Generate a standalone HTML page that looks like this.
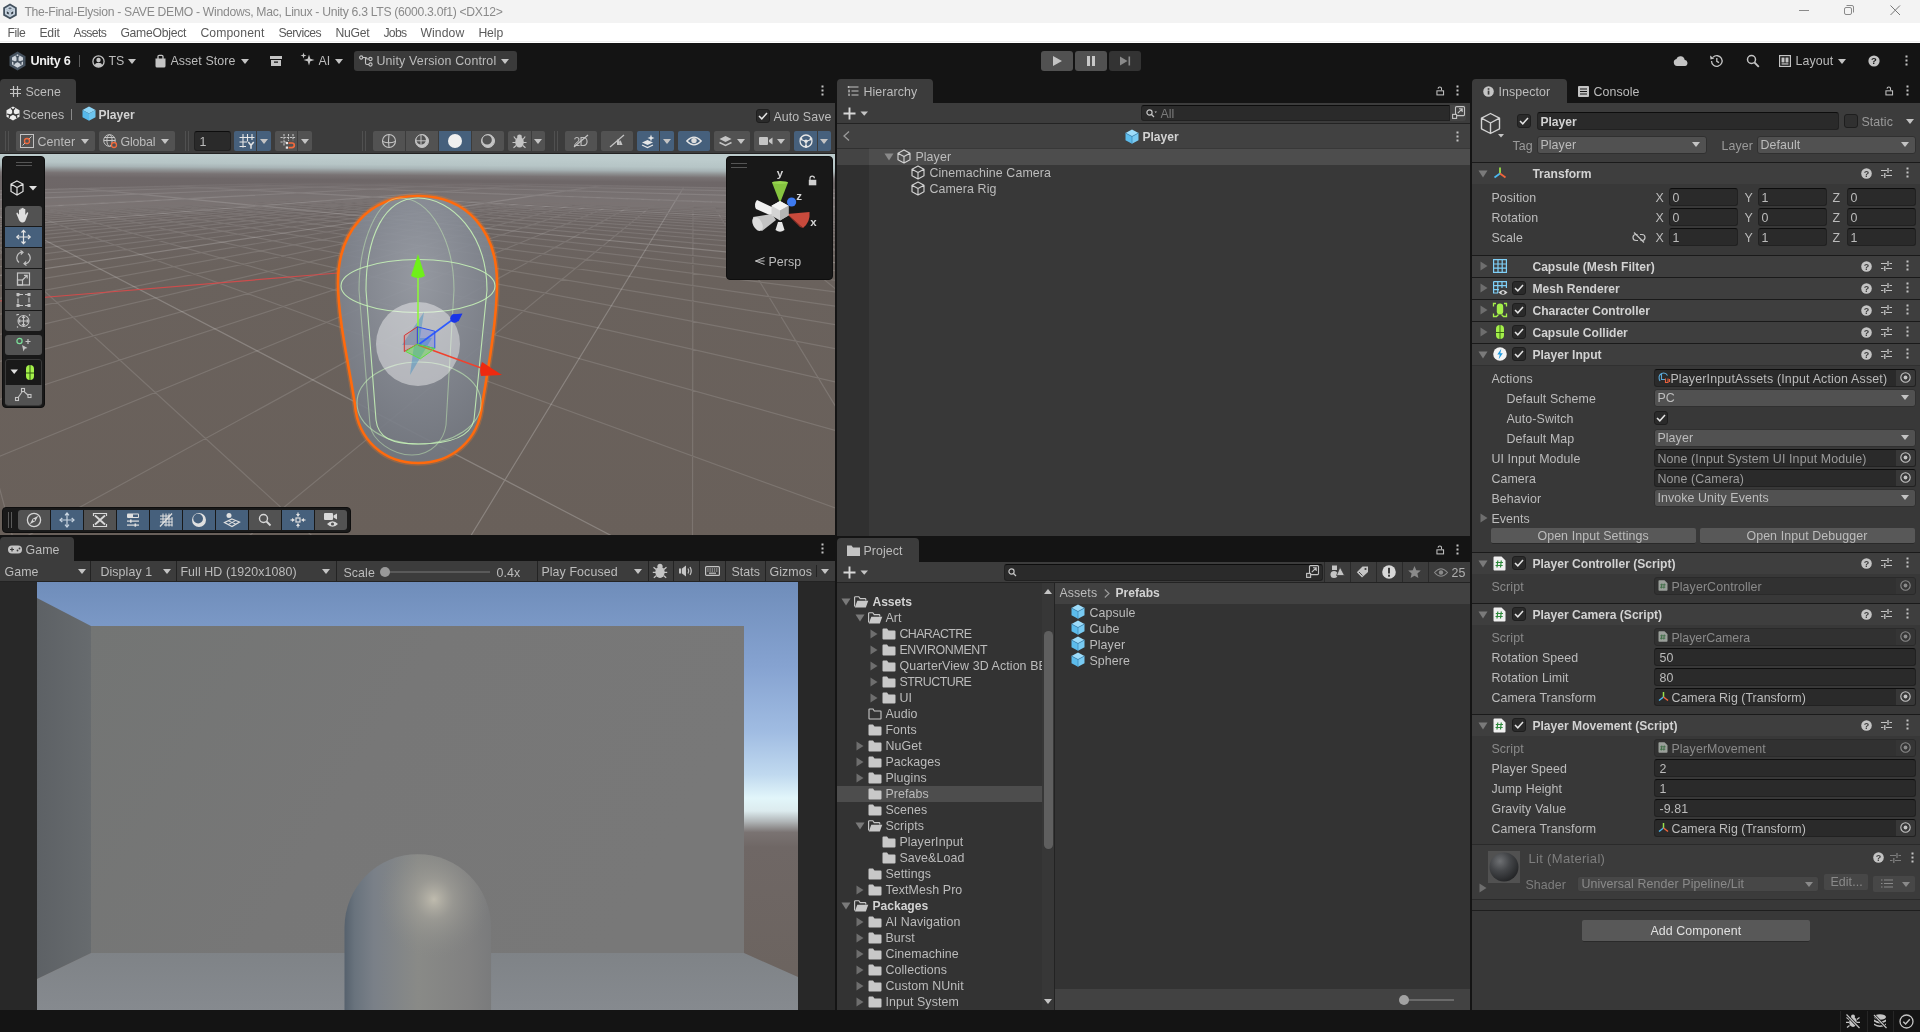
<!DOCTYPE html>
<html><head><meta charset="utf-8"><title>Unity</title>
<style>
*{box-sizing:border-box;margin:0;padding:0}
html,body{width:1920px;height:1032px;overflow:hidden;background:#141414}
body{font-family:"Liberation Sans",sans-serif;font-size:12px;color:#c4c4c4;position:relative;line-height:1}
.a{position:absolute}
.t{position:absolute;white-space:nowrap;line-height:16px;height:16px;font-size:12.4px;letter-spacing:0.1px;color:#bcbcbc;transform:translate(0.4px,0.6px);will-change:transform}
.b{font-weight:bold;color:#d2d2d2;letter-spacing:0;font-size:12.1px}
svg{position:absolute;overflow:visible}
svg:has(text){will-change:transform}
.tab{position:absolute;background:#3c3c3c;border-radius:4px 4px 0 0;height:24px}
.btn{position:absolute;background:#525252;border-radius:2px;height:20px}
.btn.on{background:#46607c}
.dd{position:absolute;background:#515151;border:1px solid #303030;border-radius:3px;height:18px}
.inp{position:absolute;background:#2a2a2a;border:1px solid #212121;border-top-color:#0d0d0d;border-radius:3px;height:18px}
.chk{position:absolute;width:14px;height:14px;background:#2a2a2a;border:1px solid #1e1e1e;border-radius:3px}
.hdr{position:absolute;left:1472px;width:448px;height:22px;background:#3e3e3e;border-top:1px solid #1a1a1a}
.arr{position:absolute;width:0;height:0;border-left:4.5px solid transparent;border-right:4.5px solid transparent;border-top:5px solid #c4c4c4}
</style></head><body>
<!-- window title bar -->
<div class="a" style="left:0;top:0;width:1920px;height:23px;background:#f3f3f3"></div>
<svg style="left:3px;top:3px" width="15" height="17" viewBox="0 0 15 17"><path d="M7 0.500 L13.800 4.400 V12.400 L7 16.300 L0.200 12.400 V4.400 Z" fill="#44525f"/><path d="M7 2.600 L12 5.500 V11.300 L7 14.200 L2 11.300 V5.500 Z" fill="#c8d4e0"/><path d="M7 4.200 L9 5.300 L7 6.400 L5 5.300 Z" fill="#5d6c7a"/><path d="M3.800 8.300 L5.800 9.400 V11.600 L3.800 10.500 Z M10.200 8.300 L8.200 9.400 V11.600 L10.200 10.500 Z" fill="#2c3640"/><path d="M7 8.200 V14 M2.200 5.600 L7 8.200 L11.800 5.600" stroke="#a9b7c5" stroke-width="0.800" fill="none"/></svg>
<div class="t" style="left:24px;top:3px;font-size:12.2px;color:#8a8a8a;letter-spacing:0.12px;letter-spacing:-0.30px">The-Final-Elysion - SAVE DEMO - Windows, Mac, Linux - Unity 6.3 LTS (6000.3.0f1) &lt;DX12&gt;</div>
<svg style="left:1799px;top:5px" width="110" height="12" viewBox="0 0 110 12"><path d="M0 5.5 H10" stroke="#8a8a8a" stroke-width="1"/><rect x="45.5" y="2.500" width="7" height="7" rx="1.500" fill="none" stroke="#8a8a8a"/><path d="M47.500 0.500 H53 a1.500 1.500 0 0 1 1.500 1.500 V7.500" fill="none" stroke="#8a8a8a"/><path d="M91.500 0.500 L101 10 M101 0.500 L91.500 10" stroke="#777" stroke-width="1"/></svg>
<!-- menu bar -->
<div class="a" style="left:0;top:23px;width:1920px;height:20px;background:#ffffff"></div><div class="a" style="left:0;top:41px;width:1920px;height:1px;background:#efefef"></div>
<div class="t" style="left:7px;top:24px;color:#5a5a5a;font-size:12.2px;letter-spacing:0;letter-spacing:-0.41px">File</div>
<div class="t" style="left:39px;top:24px;color:#5a5a5a;font-size:12.2px;letter-spacing:0;letter-spacing:-0.18px">Edit</div>
<div class="t" style="left:73px;top:24px;color:#5a5a5a;font-size:12.2px;letter-spacing:0;letter-spacing:-0.65px">Assets</div>
<div class="t" style="left:120px;top:24px;color:#5a5a5a;font-size:12.2px;letter-spacing:0;letter-spacing:-0.27px">GameObject</div>
<div class="t" style="left:200px;top:24px;color:#5a5a5a;font-size:12.2px;letter-spacing:0;letter-spacing:0.11px">Component</div>
<div class="t" style="left:278px;top:24px;color:#5a5a5a;font-size:12.2px;letter-spacing:0;letter-spacing:-0.50px">Services</div>
<div class="t" style="left:335px;top:24px;color:#5a5a5a;font-size:12.2px;letter-spacing:0;letter-spacing:-0.25px">NuGet</div>
<div class="t" style="left:383px;top:24px;color:#5a5a5a;font-size:12.2px;letter-spacing:0;letter-spacing:-0.69px">Jobs</div>
<div class="t" style="left:420px;top:24px;color:#5a5a5a;font-size:12.2px;letter-spacing:0;letter-spacing:0.11px">Window</div>
<div class="t" style="left:478px;top:24px;color:#5a5a5a;font-size:12.2px;letter-spacing:0;letter-spacing:-0.09px">Help</div>
<!-- main toolbar -->
<div class="a" style="left:0;top:43px;width:1920px;height:989px;background:#141414"></div>
<svg style="left:9px;top:51px" width="17" height="20" viewBox="0 0 17 20"><path d="M8.500 0.500 L16.500 5.200 V14.800 L8.500 19.500 L0.500 14.800 V5.200 Z" fill="#46525f"/><path d="M8.500 3.300 L14 6.500 V13.500 L8.500 16.700 L3 13.500 V6.500 Z" fill="#cdd3da"/><path d="M8.500 10 V5.800 M8.500 10 L4.900 12.100 M8.500 10 L12.100 12.100" stroke="#46525f" stroke-width="2"/><path d="M6.600 4.400 L8.500 6.300 L10.400 4.400 M3 9.800 L5.300 10.600 L5 13.800 M14 9.800 L11.700 10.600 L12 13.800" stroke="#46525f" stroke-width="1.300" fill="none"/></svg>
<div class="t b" style="left:30px;top:52px;color:#f0f0f0;font-size:12.6px;letter-spacing:-0.29px">Unity 6</div>
<div class="a" style="left:79px;top:55px;width:1px;height:12px;background:#5a5a5a"></div>
<svg style="left:92px;top:55px" width="13" height="13" viewBox="0 0 13 13"><circle cx="6.500" cy="6.500" r="5.600" fill="none" stroke="#c4c4c4" stroke-width="1.300"/><circle cx="6.500" cy="5" r="2.200" fill="#c4c4c4"/><path d="M2.600 10.300 a4 3.200 0 0 1 7.800 0 a5.500 5.500 0 0 1 -7.800 0z" fill="#c4c4c4"/></svg>
<div class="t" style="left:108px;top:52px">TS</div>
<div class="arr" style="left:128px;top:59px"></div>
<svg style="left:155px;top:54px" width="11" height="14" viewBox="0 0 11 14"><path d="M0.500 4.500 H10.500 V12 a1.500 1.500 0 0 1 -1.500 1.500 H2 a1.500 1.500 0 0 1 -1.500 -1.500 Z" fill="#c4c4c4"/><path d="M3 5 V2.500 a1.200 1.200 0 0 1 1.200 -1.200 H6.800 a1.200 1.200 0 0 1 1.200 1.200 V5" fill="none" stroke="#c4c4c4" stroke-width="1.300"/></svg>
<div class="t" style="left:170px;top:52px">Asset Store</div>
<div class="arr" style="left:241px;top:59px"></div>
<svg style="left:270px;top:56px" width="12" height="11" viewBox="0 0 12 11"><rect x="0" y="0" width="12" height="3" fill="#c4c4c4"/><path d="M1 4 H11 V10 H1 Z M4 5.500 V6.800 H8 V5.500 Z" fill="#c4c4c4" fill-rule="evenodd"/></svg>
<svg style="left:300px;top:52px" width="15" height="15" viewBox="0 0 15 15"><path d="M9 2.500 L10.300 6.700 L14.500 8 L10.300 9.300 L9 13.500 L7.700 9.300 L3.500 8 L7.700 6.700 Z" fill="#c4c4c4"/><path d="M3.500 0.500 L4.200 2.800 L6.500 3.500 L4.200 4.200 L3.500 6.500 L2.800 4.200 L0.500 3.500 L2.800 2.800 Z" fill="#c4c4c4"/></svg>
<div class="t" style="left:318px;top:52px">AI</div>
<div class="arr" style="left:335px;top:59px"></div>
<div class="a" style="left:354px;top:51px;width:163px;height:20px;background:#3a3a3a;border-radius:3px"></div>
<svg style="left:359px;top:55px" width="14" height="12" viewBox="0 0 14 12"><circle cx="2.200" cy="2.500" r="1.600" fill="none" stroke="#c4c4c4" stroke-width="1.100"/><circle cx="11.500" cy="4" r="1.600" fill="none" stroke="#c4c4c4" stroke-width="1.100"/><circle cx="11.500" cy="9.500" r="1.600" fill="none" stroke="#c4c4c4" stroke-width="1.100"/><path d="M3.800 2.500 H6.500 Q8 2.500 8 4 H10 M6.500 2.500 V8 Q6.500 9.500 8 9.500 H10" fill="none" stroke="#c4c4c4" stroke-width="1.100"/></svg>
<div class="t" style="left:376px;top:52px;letter-spacing:0.17px">Unity Version Control</div>
<div class="arr" style="left:501px;top:59px"></div>
<!-- play controls -->
<div class="a" style="left:1041px;top:51px;width:32px;height:20px;background:#515151;border-radius:3px"></div>
<div class="a" style="left:1075px;top:51px;width:32px;height:20px;background:#515151;border-radius:3px"></div>
<div class="a" style="left:1109px;top:51px;width:32px;height:20px;background:#333333;border-radius:3px"></div>
<svg style="left:1041px;top:51px" width="100" height="20" viewBox="0 0 100 20"><path d="M12 5 L21 10 L12 15 Z" fill="#c4c4c4"/><rect x="46" y="5" width="3" height="10" fill="#c8c8c8"/><rect x="51" y="5" width="3" height="10" fill="#c8c8c8"/><path d="M79 5.500 L86.500 10 L79 14.500 Z" fill="#8a8a8a"/><rect x="87.500" y="5.500" width="1.600" height="9" fill="#8a8a8a"/></svg>
<!-- right toolbar -->
<svg style="left:1673px;top:55px" width="16" height="12" viewBox="0 0 16 12"><path d="M4 11 a3.500 3.500 0 0 1 -0.500 -6.900 a4.200 4.200 0 0 1 8.100 0.600 a3.200 3.200 0 0 1 0.400 6.300 Z" fill="#c4c4c4"/></svg>
<svg style="left:1709px;top:54px" width="15" height="14" viewBox="0 0 15 14"><path d="M2.500 7 a5.300 5.300 0 1 0 1.600 -3.800" fill="none" stroke="#c4c4c4" stroke-width="1.300"/><path d="M1 1.500 L1.500 5.500 L5.300 4.500 Z" fill="#c4c4c4"/><path d="M7.800 4 V7.300 L10 8.600" fill="none" stroke="#c4c4c4" stroke-width="1.300"/></svg>
<svg style="left:1746px;top:54px" width="14" height="14" viewBox="0 0 14 14"><circle cx="5.500" cy="5.500" r="4" fill="none" stroke="#c4c4c4" stroke-width="1.500"/><path d="M8.500 8.500 L12.800 12.800" stroke="#c4c4c4" stroke-width="1.800"/></svg>
<svg style="left:1779px;top:55px" width="12" height="12" viewBox="0 0 12 12"><rect x="0.600" y="0.600" width="10.800" height="10.800" fill="none" stroke="#c4c4c4" stroke-width="1.200"/><rect x="2.500" y="2.500" width="3" height="5" fill="#c4c4c4"/><rect x="6.500" y="2.500" width="3" height="5" fill="#c4c4c4"/><rect x="2.500" y="8.300" width="7" height="1.300" fill="#c4c4c4"/></svg>
<div class="t" style="left:1795px;top:52px">Layout</div>
<div class="arr" style="left:1838px;top:59px"></div>
<svg style="left:1868px;top:55px" width="12" height="12" viewBox="0 0 12 12"><circle cx="6" cy="6" r="5.600" fill="#c4c4c4"/><text x="6" y="9.300" text-anchor="middle" font-family="Liberation Sans,sans-serif" font-weight="bold" font-size="9.500" fill="#141414">?</text></svg>
<svg style="left:1905px;top:55px" width="3" height="12" viewBox="0 0 3 12"><rect x="0.500" y="0.500" width="2" height="2" fill="#c4c4c4"/><rect x="0.500" y="4.500" width="2" height="2" fill="#c4c4c4"/><rect x="0.500" y="8.500" width="2" height="2" fill="#c4c4c4"/></svg>
<!-- ===== Scene panel ===== -->
<div class="tab" style="left:0;top:79px;width:76px"></div>
<svg style="left:10px;top:86px" width="11" height="11" viewBox="0 0 11 11"><path d="M3.500 0 V11 M7.500 0 V11 M0 3.500 H11 M0 7.500 H11" stroke="#c4c4c4" stroke-width="1.200"/></svg>
<div class="t" style="left:25px;top:83px">Scene</div>
<svg style="left:821px;top:85px" width="3" height="12" viewBox="0 0 3 12"><rect x="0.500" y="0.500" width="2" height="2" fill="#c4c4c4"/><rect x="0.500" y="4.500" width="2" height="2" fill="#c4c4c4"/><rect x="0.500" y="8.500" width="2" height="2" fill="#c4c4c4"/></svg>
<div class="a" style="left:0;top:103px;width:835px;height:24px;background:#3c3c3c"></div>
<div class="a" style="left:0;top:127px;width:835px;height:27px;background:#3c3c3c;border-bottom:1px solid #232323"></div>
<svg style="left:6px;top:106px" width="14" height="15" viewBox="0 0 14 15"><path d="M7 0.500 L13.500 4.200 V10.800 L7 14.500 L0.500 10.800 V4.200 Z" fill="#ececec"/><path d="M7 7.800 V3.800 M7 7.800 L3.600 9.800 M7 7.800 L10.400 9.800" stroke="#3c3c3c" stroke-width="1.700"/><path d="M5 2.200 L7 4.200 L9 2.200 M0.800 8 L3.600 8.800 L3.200 12 M13.200 8 L10.400 8.800 L10.800 12" stroke="#3c3c3c" stroke-width="1.300" fill="none"/></svg>
<div class="t" style="left:22px;top:106px">Scenes</div>
<div class="a" style="left:71px;top:109px;width:1px;height:11px;background:#8a8a8a"></div>
<svg style="left:82px;top:106px" width="14" height="15" viewBox="0 0 14 15"><path d="M7 0.500 L13.500 4 L7 7.500 L0.500 4 Z" fill="#8fd6f7"/><path d="M0.500 4 L7 7.500 V14.800 L0.500 11.200 Z" fill="#56b8ea"/><path d="M13.500 4 L7 7.500 V14.800 L13.500 11.200 Z" fill="#6cc4ee"/></svg>
<div class="t b" style="left:98px;top:106px">Player</div>
<div class="chk" style="left:756px;top:109px;width:14px;height:14px"></div>
<svg style="left:758px;top:112px" width="10" height="8" viewBox="0 0 10 8"><path d="M1 4 L3.800 6.800 L9 1" stroke="#e4e4e4" stroke-width="1.500" fill="none"/></svg>
<div class="t" style="left:773px;top:108px">Auto Save</div>
<!-- scene toolbar -->
<div class="a" style="left:5px;top:131px;width:1px;height:20px;background:#505050"></div><div class="a" style="left:8px;top:131px;width:1px;height:20px;background:#505050"></div>
<div class="btn" style="left:16px;top:131px;width:79px"></div>
<svg style="left:20px;top:134px" width="14" height="14" viewBox="0 0 14 14"><rect x="0.500" y="0.500" width="13" height="13" fill="none" stroke="#c4c4c4"/><path d="M2.500 11.500 L11.500 2.500" stroke="#c4c4c4" stroke-width="1"/><circle cx="7" cy="7" r="2.500" fill="#525252" stroke="#f26a3d" stroke-width="1.300"/></svg>
<div class="t" style="left:37px;top:133px">Center</div><div class="arr" style="left:81px;top:139px"></div>
<div class="btn" style="left:99px;top:131px;width:76px"></div>
<svg style="left:103px;top:134px" width="15" height="15" viewBox="0 0 15 15"><circle cx="6.500" cy="6.500" r="5.800" fill="none" stroke="#c4c4c4"/><ellipse cx="6.500" cy="6.500" rx="2.600" ry="5.800" fill="none" stroke="#c4c4c4"/><path d="M0.700 6.500 H12.300 M1.500 3.500 H11.500" stroke="#c4c4c4"/><circle cx="11" cy="11" r="2.500" fill="#525252" stroke="#f26a3d" stroke-width="1.300"/></svg>
<div class="t" style="left:120px;top:133px;letter-spacing:-0.14px">Global</div><div class="arr" style="left:161px;top:139px"></div>
<div class="a" style="left:185px;top:131px;width:1px;height:20px;background:#505050"></div><div class="a" style="left:188px;top:131px;width:1px;height:20px;background:#505050"></div>
<div class="inp" style="left:194px;top:131px;width:37px;height:20px"></div><div class="t" style="left:199px;top:133px">1</div>
<div class="btn on" style="left:234px;top:131px;width:22px;border-radius:2px 0 0 2px"></div><div class="btn on" style="left:257px;top:131px;width:14px;border-radius:0 2px 2px 0"></div>
<svg style="left:239px;top:134px" width="16" height="15" viewBox="0 0 16 15"><path d="M4 0 V13.500 M8.500 0 V7.500 M13 0 V6 M0.500 3.500 H15.500 M0.500 8 H8 M0.500 12.500 H7" stroke="#e6e6e6" stroke-width="1.100"/><path d="M9.300 8 L12 11.300 L14.700 8 M12 11.300 V14.800" stroke="#e6e6e6" stroke-width="1.500" fill="none"/></svg>
<div class="arr" style="left:260px;top:139px"></div>
<div class="btn" style="left:275px;top:131px;width:22px;border-radius:2px 0 0 2px"></div><div class="btn" style="left:298px;top:131px;width:14px;border-radius:0 2px 2px 0"></div>
<svg style="left:280px;top:134px" width="16" height="15" viewBox="0 0 16 15"><path d="M4 0 V12 M8.500 0 V7 M13 0 V6.500 M0.500 3.500 H15.500 M0.500 8 H7" stroke="#c4c4c4" stroke-width="1.100" stroke-dasharray="2.200 0.900"/><path d="M8.500 9 H12 a2.300 2.300 0 0 1 0 4.600 H8.500" fill="none" stroke="#f26a3d" stroke-width="1.700"/><rect x="5.800" y="8" width="2.200" height="2.200" fill="#e6e6e6"/><rect x="5.800" y="12.500" width="2.200" height="2.200" fill="#e6e6e6"/></svg>
<div class="arr" style="left:301px;top:139px"></div>
<div class="a" style="left:362px;top:131px;width:1px;height:20px;background:#505050"></div><div class="a" style="left:365px;top:131px;width:1px;height:20px;background:#505050"></div>
<div class="btn" style="left:373px;top:131px;width:32px;border-radius:2px 0 0 2px"></div>
<div class="btn" style="left:406px;top:131px;width:32px;border-radius:0"></div>
<div class="btn on" style="left:439px;top:131px;width:32px;border-radius:0"></div>
<div class="btn" style="left:472px;top:131px;width:32px;border-radius:0 2px 2px 0"></div>
<svg style="left:373px;top:131px" width="132" height="20" viewBox="0 0 132 20"><circle cx="16" cy="10" r="6.500" fill="none" stroke="#c4c4c4" stroke-width="1.100"/><path d="M16 3.500 Q15 10 16 16.500 M9.600 10.500 Q16 13 22.400 10.500" fill="none" stroke="#c4c4c4" stroke-width="1.100"/><path fill-rule="evenodd" d="M42.500 10 a6.500 6.500 0 1 0 13 0 a6.500 6.500 0 1 0 -13 0 Z M43.300 8.800 a4.800 4.800 0 1 0 9.600 0 a4.800 4.800 0 1 0 -9.600 0 Z" fill="#c4c4c4"/><circle cx="49" cy="10" r="6.500" fill="none" stroke="#c4c4c4" stroke-width="1"/><path d="M48 3.800 V13.500 M43 9.800 H53" stroke="#c4c4c4" stroke-width="1" fill="none"/><circle cx="82" cy="10" r="7" fill="#efefef"/><path fill-rule="evenodd" d="M108.500 10 a6.500 6.500 0 1 0 13 0 a6.500 6.500 0 1 0 -13 0 Z M109.400 8.900 a4.700 4.700 0 1 0 9.400 0 a4.700 4.700 0 1 0 -9.400 0 Z" fill="#c4c4c4"/><circle cx="115" cy="10" r="6.500" fill="none" stroke="#c4c4c4" stroke-width="1"/></svg>
<div class="btn" style="left:508px;top:131px;width:23px;border-radius:2px 0 0 2px"></div><div class="btn" style="left:532px;top:131px;width:13px;border-radius:0 2px 2px 0"></div>
<svg style="left:512px;top:134px" width="15" height="14" viewBox="0 0 15 14"><ellipse cx="7.500" cy="8.300" rx="4.300" ry="5.200" fill="#c4c4c4"/><circle cx="7.500" cy="3" r="2.400" fill="#c4c4c4"/><path d="M4 5.500 L1.800 2.500 M11 5.500 L13.200 2.500 M3.800 8.500 H0.500 M11.200 8.500 H14.500 M4.200 11.500 L1.500 13.800 M10.800 11.500 L13.500 13.800" stroke="#c4c4c4" stroke-width="1.200"/></svg>
<div class="arr" style="left:534px;top:139px"></div>
<div class="a" style="left:554px;top:131px;width:1px;height:20px;background:#505050"></div><div class="a" style="left:557px;top:131px;width:1px;height:20px;background:#505050"></div>
<div class="btn" style="left:565px;top:131px;width:32px"></div>
<div class="t" style="left:573px;top:133px;font-size:12px;letter-spacing:-0.500px">2D</div>
<svg style="left:572px;top:134px" width="18" height="14" viewBox="0 0 18 14"><path d="M2 13 L16 1" stroke="#c4c4c4" stroke-width="1.200"/></svg>
<div class="btn" style="left:601px;top:131px;width:32px"></div>
<svg style="left:609px;top:134px" width="16" height="14" viewBox="0 0 16 14"><path d="M1 13 L15 1" stroke="#c4c4c4" stroke-width="1.200"/><path d="M8 5.500 a2.800 2.800 0 0 1 2.800 2.800 L10 11 H8 Z" fill="#c4c4c4"/><path d="M11.500 6 L13.500 11 H10 Z" fill="#c4c4c4"/></svg>
<div class="btn on" style="left:637px;top:131px;width:22px;border-radius:2px 0 0 2px"></div><div class="btn on" style="left:660px;top:131px;width:14px;border-radius:0 2px 2px 0"></div>
<svg style="left:641px;top:134px" width="15" height="14" viewBox="0 0 15 14"><path d="M1 8.500 L6.500 6 L12 8.500 L6.500 11 Z" fill="#e6e6e6"/><path d="M1 11 L6.500 13.500 L12 11" fill="none" stroke="#e6e6e6" stroke-width="1.200"/><path d="M10 0.500 L10.900 3.100 L13.500 4 L10.900 4.900 L10 7.500 L9.100 4.900 L6.500 4 L9.100 3.100 Z" fill="#e6e6e6"/></svg>
<div class="arr" style="left:663px;top:139px"></div>
<div class="btn on" style="left:678px;top:131px;width:32px"></div>
<svg style="left:686px;top:136px" width="16" height="10" viewBox="0 0 16 10"><path d="M0.800 5 Q8 -2.800 15.200 5 Q8 12.800 0.800 5 Z" fill="none" stroke="#e6e6e6" stroke-width="1.300"/><circle cx="8" cy="4.600" r="2.700" fill="#dcdcdc"/></svg>
<div class="btn" style="left:714px;top:131px;width:36px"></div>
<svg style="left:719px;top:135px" width="13" height="12" viewBox="0 0 13 12"><path d="M0.500 4 L6.500 1 L12.500 4 L6.500 7 Z" fill="#c4c4c4"/><path d="M0.500 7.500 L6.500 10.500 L12.500 7.500" fill="none" stroke="#c4c4c4" stroke-width="1.500"/></svg>
<div class="arr" style="left:737px;top:139px"></div>
<div class="btn" style="left:754px;top:131px;width:36px"></div>
<svg style="left:759px;top:136px" width="14" height="10" viewBox="0 0 14 10"><rect x="0" y="1" width="9" height="8" rx="1" fill="#c4c4c4"/><path d="M10 4 L13.500 1.500 V8.500 L10 6 Z" fill="#c4c4c4"/></svg>
<div class="arr" style="left:777px;top:139px"></div>
<div class="btn on" style="left:794px;top:131px;width:23px;border-radius:2px 0 0 2px"></div><div class="btn on" style="left:818px;top:131px;width:13px;border-radius:0 2px 2px 0"></div>
<svg style="left:799px;top:134px" width="14" height="14" viewBox="0 0 14 14"><circle cx="7" cy="7" r="6" fill="none" stroke="#e6e6e6" stroke-width="1.300"/><path d="M1.500 5 Q7 9 12.500 5 M7 7.500 V13" fill="none" stroke="#e6e6e6" stroke-width="1.200"/><circle cx="7" cy="7.300" r="1.700" fill="#e6e6e6"/><circle cx="2" cy="5" r="1.400" fill="#e6e6e6"/><circle cx="12" cy="5" r="1.400" fill="#e6e6e6"/><circle cx="7" cy="12.500" r="1.400" fill="#e6e6e6"/></svg>
<div class="arr" style="left:820px;top:139px"></div>
<svg style="left:0;top:154px" width="835" height="381" viewBox="0 0 835 381">
<defs><linearGradient id="sky" x1="0" y1="0" x2="-0.017" y2="1"><stop offset="0" stop-color="#bdcccd"/><stop offset="0.020" stop-color="#b6c5c6"/><stop offset="0.030" stop-color="#a8b4b6"/><stop offset="0.039" stop-color="#8f9293"/><stop offset="0.048" stop-color="#797374"/><stop offset="0.060" stop-color="#6e6768"/><stop offset="0.3" stop-color="#6a625d"/><stop offset="1" stop-color="#69605a"/></linearGradient>
<clipPath id="scl"><rect x="0" y="0" width="835" height="381"/></clipPath>
<radialGradient id="capg" cx="0.5" cy="0.3" r="0.75"><stop offset="0" stop-color="#9a9fa8"/><stop offset="0.5" stop-color="#848993"/><stop offset="1" stop-color="#70757e"/></radialGradient>
<linearGradient id="fg" x1="0" y1="0" x2="0" y2="1"><stop offset="0.042" stop-color="#fff" stop-opacity="0.00"/><stop offset="0.052" stop-color="#fff" stop-opacity="0.00"/><stop offset="0.063" stop-color="#fff" stop-opacity="0.00"/><stop offset="0.073" stop-color="#fff" stop-opacity="0.00"/><stop offset="0.084" stop-color="#fff" stop-opacity="0.25"/><stop offset="0.094" stop-color="#fff" stop-opacity="0.43"/><stop offset="0.105" stop-color="#fff" stop-opacity="0.54"/><stop offset="0.115" stop-color="#fff" stop-opacity="0.62"/><stop offset="0.126" stop-color="#fff" stop-opacity="0.68"/><stop offset="0.136" stop-color="#fff" stop-opacity="0.72"/><stop offset="0.147" stop-color="#fff" stop-opacity="0.75"/><stop offset="0.157" stop-color="#fff" stop-opacity="0.78"/><stop offset="0.262" stop-color="#fff" stop-opacity="0.91"/><stop offset="0.367" stop-color="#fff" stop-opacity="0.96"/><stop offset="0.472" stop-color="#fff" stop-opacity="0.98"/><stop offset="0.577" stop-color="#fff" stop-opacity="0.99"/><stop offset="0.682" stop-color="#fff" stop-opacity="1.00"/><stop offset="0.787" stop-color="#fff" stop-opacity="1.00"/><stop offset="0.892" stop-color="#fff" stop-opacity="1.00"/><stop offset="0.997" stop-color="#fff" stop-opacity="1.00"/><stop offset="1.000" stop-color="#fff" stop-opacity="1.00"/></linearGradient><mask id="fade" maskUnits="userSpaceOnUse" x="0" y="0" width="835" height="381"><rect width="835" height="381" fill="url(#fg)"/></mask>
</defs>
<rect width="835" height="381" fill="url(#sky)"/>
<g clip-path="url(#scl)" mask="url(#fade)" stroke="#ffffff" stroke-width="1.2" fill="none">
<path d="M-2.0 37.0L369.1 26.8 M-2.0 37.3L372.2 26.9 M-2.0 37.6L375.5 27.0 M-2.0 38.0L378.7 27.0 M-2.0 38.3L382.0 27.1 M-2.0 38.7L385.4 27.2 M-2.0 39.1L388.8 27.2 M-2.0 39.5L392.3 27.3 M-2.0 39.9L395.8 27.4 M-2.0 40.8L402.9 27.5 M-2.0 41.3L406.6 27.6 M-2.0 41.7L410.3 27.6 M-2.0 42.2L414.1 27.7 M-2.0 42.8L418.0 27.8 M-2.0 43.3L421.9 27.9 M-2.0 43.9L425.8 27.9 M-2.0 44.5L429.8 28.0 M-2.0 45.1L433.9 28.1 M-2.0 46.5L442.3 28.3 M-2.0 47.2L446.6 28.4 M-2.0 48.0L450.9 28.4 M-2.0 48.8L455.3 28.5 M-2.0 49.7L459.8 28.6 M-2.0 50.6L464.4 28.7 M-2.0 51.5L469.1 28.8 M-2.0 52.5L473.8 28.9 M-2.0 53.6L478.6 29.0 M-2.0 56.0L488.5 29.2 M-2.0 57.3L493.6 29.3 M-2.0 58.7L498.7 29.4 M-2.0 60.2L504.0 29.5 M-2.0 61.8L509.3 29.6 M-2.0 63.6L514.8 29.7 M-2.0 65.5L520.3 29.8 M-2.0 67.6L526.0 29.9 M-2.0 69.8L531.7 30.0 M-2.0 75.0L543.6 30.2 M-2.0 78.0L549.7 30.4 M-2.0 81.3L555.9 30.5 M-2.0 85.1L562.2 30.6 M-2.0 89.3L568.7 30.7 M-2.0 94.0L575.3 30.9 M-2.0 99.4L582.0 31.0 M-2.0 105.7L588.9 31.1 M-2.0 113.0L595.9 31.3 M-2.0 132.0L610.4 31.5 M-2.0 144.7L617.8 31.7 M-2.0 160.5L625.5 31.8 M-2.0 180.9L633.3 32.0 M-2.0 208.0L641.2 32.1 M-2.0 246.0L649.4 32.3 M-2.0 303.0L657.7 32.5 M25.3 383.0L666.2 32.6 M-2.0 328.4L12.7 383.0 M247.7 383.0L675.0 32.8 M-2.0 94.6L313.3 383.0 M692.5 383.0L693.0 33.2 M-2.0 48.5L837.0 354.7 M837.0 254.8L702.4 33.3 M-2.0 41.5L837.0 276.9 M837.0 136.2L712.0 33.5 M-2.0 37.1L837.0 228.3 M837.0 96.8L721.8 33.7 M9.0 36.2L837.0 195.1 M837.0 77.1L731.8 33.9 M21.9 35.8L837.0 170.9 M837.0 65.3L742.2 34.1 M34.4 35.5L837.0 152.5 M837.0 57.4L752.7 34.3 M46.3 35.2L837.0 138.1 M837.0 51.7L763.6 34.5 M57.9 34.9L837.0 126.5 M837.0 47.5L774.7 34.7 M69.0 34.6L837.0 116.9 M837.0 41.6L797.9 35.2 M90.2 34.0L837.0 102.1 M837.0 39.5L810.0 35.4 M100.2 33.7L837.0 96.2 M837.0 37.7L822.4 35.7 M110.0 33.5L837.0 91.1 M837.0 36.2L835.1 35.9 M119.4 33.2L837.0 86.6 M128.5 33.0L837.0 82.6 M137.3 32.8L837.0 79.1 M145.8 32.5L837.0 76.0 M154.1 32.3L837.0 73.1 M162.2 32.1L837.0 70.5 M177.6 31.7L837.0 66.0 M184.9 31.5L837.0 64.0 M192.1 31.3L837.0 62.2 M199.0 31.1L837.0 60.5 M205.8 30.9L837.0 59.0 M212.4 30.8L837.0 57.5 M218.8 30.6L837.0 56.2 M225.0 30.4L837.0 54.9 M231.1 30.3L837.0 53.7 M242.8 30.0L837.0 51.6 M248.4 29.8L837.0 50.6 M253.9 29.7L837.0 49.7 M259.3 29.5L837.0 48.8 M264.5 29.4L837.0 48.0 M269.6 29.2L837.0 47.2 M274.6 29.1L837.0 46.5 M279.5 29.0L837.0 45.8 M284.2 28.9L837.0 45.1 M293.4 28.6L837.0 43.8 M297.8 28.5L837.0 43.3 M302.2 28.4L837.0 42.7 M306.4 28.3L837.0 42.2 M310.6 28.1L837.0 41.7 M314.7 28.0L837.0 41.2 M318.6 27.9L837.0 40.7 M322.5 27.8L837.0 40.2 M326.4 27.7L837.0 39.8 M333.8 27.5L837.0 39.0 M337.4 27.4L837.0 38.6 M340.9 27.3L837.0 38.2 M344.3 27.3L837.0 37.9 M347.7 27.2L837.0 37.5 M351.0 27.1L837.0 37.2 M354.3 27.0L837.0 36.9 M357.5 26.9L837.0 36.6 M360.6 26.8L837.0 36.3" stroke-opacity="0.13"/>
<path d="M-2.0 36.7L365.9 26.8 M-2.0 40.3L399.3 27.4 M-2.0 45.8L438.1 28.2 M-2.0 54.8L483.5 29.1 M-2.0 72.3L537.6 30.1 M-2.0 121.7L603.1 31.4 M470.1 383.0L683.9 33.0 M-2.0 61.7L613.9 383.0 M837.0 44.2L786.2 35.0 M79.8 34.3L837.0 108.9 M170.0 31.9L837.0 68.2 M237.0 30.1L837.0 52.6 M288.9 28.7L837.0 44.5 M330.1 27.6L837.0 39.4 M363.7 26.7L837.0 36.0" stroke-opacity="0.22"/>
</g>
<line x1="0" y1="147" x2="338" y2="119" stroke="#d84a4a" stroke-width="1.2" stroke-opacity="0.9"/>
<path d="M338 129 C338 78 368 42 418 42 C468 42 497 78 497 129 C497 166 488 216 482 251 C479 286 452 309 418 309 C384 309 358 286 355 251 C350 216 338 166 338 129 Z" fill="none" stroke="#ff7a20" stroke-width="5.5" stroke-opacity="0.28"/>
<path d="M338 129 C338 78 368 42 418 42 C468 42 497 78 497 129 C497 166 488 216 482 251 C479 286 452 309 418 309 C384 309 358 286 355 251 C350 216 338 166 338 129 Z" fill="url(#capg)" fill-opacity="0.9" stroke="#ff6a0d" stroke-width="2.6"/>
<g fill="none" stroke="#c9f7b9" stroke-width="1.1" stroke-opacity="0.85">
<ellipse cx="418" cy="132" rx="77" ry="26.5"/>
<ellipse cx="419" cy="249" rx="62" ry="41" stroke-opacity="0.55"/>
<path d="M366 136 C366 81 385 44 418 44 C452 44 487 81 487 136 L474 266 C470 284 447 290 418 290 C392 290 378 284 376 266 Z"/>
<path d="M359 136 C359 86 378 44 400 44 C430 44 454 86 454 136 L446 271 C444 286 432 301 412 301 C392 301 372 286 370 271 Z" stroke-opacity="0.45"/>
</g>
<circle cx="418" cy="190" r="42" fill="#ffffff" fill-opacity="0.42"/>
<path d="M424 158 L402 191 L414 191 L410 221 L432 184 L420 184 Z" fill="#3f8fc0" fill-opacity="0.45"/>
<path d="M418 191 V118" stroke="#8cf53c" stroke-width="1.6"/>
<path d="M418 100 L411 122 Q418 126 425 122 Z" fill="#6ff01a"/>
<path d="M418 191 L484 215" stroke="#f0412d" stroke-width="1.6"/>
<path d="M502 221 L482 208 Q479 216 481 222 Z" fill="#ee2a10"/>
<path d="M418 191 L452 166" stroke="#2e5cff" stroke-width="1.6"/>
<circle cx="454.5" cy="164.5" r="4.3" fill="#1a34e8"/><path d="M462.5 159.5 L452 160.5 L458.5 167.5 Z" fill="#1a34e8"/>
<path d="M417.4 172.8 L404.3 181.5 V197.5 L417.4 190.2 Z" fill="#e03030" fill-opacity="0.12" stroke="#d83030" stroke-width="1"/>
<path d="M417.4 172.8 L434.8 177.2 V194.6 L417.4 190.2 Z" fill="#3050ff" fill-opacity="0.22" stroke="#2a50f0" stroke-width="1"/>
<path d="M417.4 190.2 L434.8 194.6 L420.3 204.8 L405.8 197.5 Z" fill="#60e040" fill-opacity="0.4" stroke="#60e040" stroke-width="1"/>
</svg>
<!-- left tools overlay -->
<div class="a" style="left:2px;top:156px;width:43px;height:252px;background:#191919;border-radius:4px;border:1px solid #0e0e0e"></div>
<div class="a" style="left:16px;top:162px;width:16px;height:1px;background:#555"></div><div class="a" style="left:16px;top:165px;width:16px;height:1px;background:#555"></div>
<svg style="left:10px;top:180px" width="28" height="16" viewBox="0 0 28 16"><path d="M7 1 L13 4 V11.500 L7 15 L1 11.500 V4 Z M1 4 L7 7.500 L13 4 M7 7.500 V15" fill="none" stroke="#e0e0e0" stroke-width="1.200"/><path d="M19 6 H27 L23 10.500 Z" fill="#e0e0e0"/></svg>
<div class="btn" style="left:5px;top:206px;width:37px;height:20px;border-radius:3px 3px 0 0"></div>
<div class="btn on" style="left:5px;top:227px;width:37px;height:20px;border-radius:0"></div>
<div class="btn" style="left:5px;top:248px;width:37px;height:20px;border-radius:0"></div>
<div class="btn" style="left:5px;top:269px;width:37px;height:20px;border-radius:0"></div>
<div class="btn" style="left:5px;top:290px;width:37px;height:20px;border-radius:0"></div>
<div class="btn" style="left:5px;top:311px;width:37px;height:20px;border-radius:0 0 3px 3px"></div>
<div class="btn" style="left:5px;top:335px;width:37px;height:20px;border-radius:3px"></div>
<div class="a" style="left:5px;top:359px;width:37px;height:47px;border:1px solid #3a3a3a;border-radius:3px"></div>
<div class="btn" style="left:5px;top:385px;width:37px;height:20px;border-radius:0 0 3px 3px"></div>
<svg style="left:5px;top:206px" width="37" height="200" viewBox="0 0 37 200">
<!-- hand -->
<path d="M13 11.500 L11.500 8 Q11 6.500 12.300 6.500 L14 8.800 V4 Q14.700 3 15.400 4 V8 V2.800 Q16.200 1.800 17 2.800 V8 V2.200 Q17.900 1.200 18.700 2.200 V8 V3.300 Q19.500 2.300 20.300 3.300 V9 L22 6.500 Q23.300 6 23.200 7.300 L21 13 Q20 16.500 17.500 16.500 Q14.500 16.500 13 11.500 Z" fill="#e0e0e0"/>
<!-- move -->
<g transform="translate(0,21)" stroke="#e6e6e6" fill="none" stroke-width="1.200"><path d="M18.500 4 V16 M12.500 10 H24.500"/><path d="M16.500 5.500 L18.500 3.300 L20.500 5.500 M16.500 14.500 L18.500 16.700 L20.500 14.500 M14 8 L11.800 10 L14 12 M23 8 L25.200 10 L23 12"/></g>
<!-- rotate -->
<g transform="translate(0,42)" stroke="#c4c4c4" fill="none" stroke-width="1.200"><path d="M14 14.500 A5.800 5.800 0 0 1 17.500 4.200 M23 5.500 A5.800 5.800 0 0 1 19.500 15.800"/><path d="M15.500 2.500 L18 4.300 L15.800 6.500 M21.500 17.500 L19 15.700 L21.200 13.500"/></g>
<!-- scale -->
<g transform="translate(0,63)" stroke="#c4c4c4" fill="none" stroke-width="1.200"><rect x="12.500" y="4" width="12" height="12"/><rect x="12.500" y="11" width="5" height="5"/><path d="M17.500 11 L22 6.500 M19 6.300 H22.200 V9.500"/></g>
<!-- rect -->
<g transform="translate(0,84)" stroke="#c4c4c4" fill="none" stroke-width="1.200" stroke-dasharray="5 2"><rect x="13" y="4.500" width="11" height="11"/></g>
<g transform="translate(0,84)" fill="#c4c4c4"><rect x="11.500" y="3" width="3" height="3"/><rect x="22.500" y="3" width="3" height="3"/><rect x="11.500" y="14" width="3" height="3"/><rect x="22.500" y="14" width="3" height="3"/></g>
<!-- transform -->
<g transform="translate(0,105)" stroke="#c4c4c4" fill="none" stroke-width="1.100"><circle cx="18.500" cy="10" r="5.500"/><path d="M18.500 5.500 V14.500 M14 10 H23"/><path d="M12 4.500 V3.500 H14 M25 15.500 V16.500 H23 M12 15.500 L13 16.500 M24 3.500 L25 4.500"/><path d="M17 6.800 L18.500 5.300 L20 6.800 M17 13.200 L18.500 14.700 L20 13.200 M15.300 8.500 L13.800 10 L15.300 11.500 M21.700 8.500 L23.200 10 L21.700 11.500"/></g>
<!-- custom -->
<g transform="translate(0,129)"><circle cx="14.500" cy="6" r="2.600" fill="none" stroke="#7be09a" stroke-width="1.200"/><path d="M20.500 6.500 H25.500 M23 4 V9" stroke="#c4c4c4" stroke-width="1.200"/><path d="M17 10 L22.500 13 L19.800 13.800 L18.500 16.500 Z" fill="#c4c4c4"/></g>
<!-- capsule -->
<g transform="translate(0,153)"><path d="M5.500 10.500 H13 L9.200 15 Z" fill="#e0e0e0"/><rect x="21" y="6" width="8" height="15" rx="4" fill="#a4f04a"/><path d="M25 6 V21 M21 14 H29" stroke="#2f5a10" stroke-width="1"/></g>
<!-- edit points -->
<g transform="translate(0,179)" stroke="#c4c4c4" fill="none" stroke-width="1.100"><path d="M12.500 13.500 L18 5.500 L24 11"/><rect x="16.500" y="3.500" width="3" height="3" fill="#525252"/><rect x="10.500" y="12.500" width="3" height="3" fill="#525252"/><rect x="23" y="9.500" width="3" height="3" fill="#525252"/></g>
</svg>
<!-- bottom overlay toolbar -->
<div class="a" style="left:2px;top:507px;width:349px;height:26px;background:#191919;border-radius:4px;border:1px solid #0e0e0e"></div>
<div class="a" style="left:8px;top:512px;width:1px;height:16px;background:#5a5a5a"></div><div class="a" style="left:11px;top:512px;width:1px;height:16px;background:#5a5a5a"></div>
<div class="btn" style="left:18px;top:510px;width:32px;height:20px;border-radius:3px 0 0 3px"></div>
<div class="btn on" style="left:51px;top:510px;width:32px;height:20px;border-radius:0"></div>
<div class="btn" style="left:84px;top:510px;width:32px;height:20px;border-radius:0"></div>
<div class="btn on" style="left:117px;top:510px;width:32px;height:20px;border-radius:0"></div>
<div class="btn on" style="left:150px;top:510px;width:32px;height:20px;border-radius:0"></div>
<div class="btn on" style="left:183px;top:510px;width:32px;height:20px;border-radius:0"></div>
<div class="btn on" style="left:216px;top:510px;width:32px;height:20px;border-radius:0"></div>
<div class="btn" style="left:249px;top:510px;width:32px;height:20px;border-radius:0"></div>
<div class="btn on" style="left:282px;top:510px;width:32px;height:20px;border-radius:0"></div>
<div class="btn" style="left:315px;top:510px;width:32px;height:20px;border-radius:0 3px 3px 0"></div>
<svg style="left:18px;top:510px" width="330" height="20" viewBox="0 0 330 20">
<g stroke="#d4d4d4" fill="none" stroke-width="1.300"><circle cx="16" cy="10" r="6.600"/><path d="M20.300 5.700 L17.300 11.300 L11.700 14.300 L14.700 8.700 Z" fill="#d4d4d4" stroke="none"/><circle cx="16" cy="10" r="1" fill="#525252" stroke="none"/></g>
<g transform="translate(33,0)" stroke="#c8d4e0" fill="none" stroke-width="1.200"><path d="M16 3.500 V16.500 M9.500 10 H22.500"/><path d="M14 5.300 L16 3 L18 5.300 M14 14.700 L16 17 L18 14.700 M11.300 8 L9 10 L11.300 12 M20.700 8 L23 10 L20.700 12"/></g>
<g transform="translate(66,0)" stroke="#d8d8d8" fill="none" stroke-width="1.200"><path d="M9.500 6 V3.500 H22.500 V6 M9.500 14 V16.500 H22.500 V14"/><path d="M11 5.500 L21 14.500 M21 5.500 L11 14.500" stroke-width="1.800"/></g>
<g transform="translate(99,0)" fill="#e0e0e0"><rect x="10" y="3.500" width="12" height="4.500" rx="1"/><rect x="16" y="4.500" width="5" height="2.500" fill="#46607c"/><rect x="10" y="10.500" width="12" height="1.200"/><rect x="13" y="9.500" width="1.600" height="3.200"/><rect x="10" y="14.500" width="12" height="1.200"/><rect x="17.500" y="13.500" width="1.600" height="3.200"/></g>
<g transform="translate(132,0)" stroke="#e0e0e0" fill="none" stroke-width="1"><path d="M13 3.500 V13 M16 3.500 V16.500 M19 3.500 V16.500 M22 7 V16.500 M10 6 H20 M10 9 H22.500 M10 12 H22.500 M14 15 H22.500"/><path d="M10 16.500 L22 3.500" stroke-width="1.300"/></g>
<g transform="translate(165,0)"><path fill-rule="evenodd" d="M9 10 a7 7 0 1 0 14 0 a7 7 0 1 0 -14 0 Z M10.200 8.600 a4.900 4.900 0 1 0 9.800 0 a4.900 4.900 0 1 0 -9.800 0 Z" fill="#e0e0e0"/></g>
<g transform="translate(198,0)"><circle cx="13" cy="5.500" r="2.500" fill="#e0e0e0"/><path d="M16 9 L23.500 12 L16 16.500 L8.500 12.500 Z" fill="none" stroke="#e0e0e0" stroke-width="1.200"/><path d="M12.200 10.700 L19.800 14.200 M19.800 10.500 L12.200 14.500" stroke="#e0e0e0" stroke-width="1"/></g>
<g transform="translate(231,0)"><circle cx="14.500" cy="8.500" r="4" fill="none" stroke="#d8d8d8" stroke-width="1.400"/><path d="M17.500 11.500 L21.500 15.500" stroke="#d8d8d8" stroke-width="1.800"/></g>
<g transform="translate(264,0)" fill="#e0e0e0"><rect x="14" y="8" width="4" height="4" fill="none" stroke="#e0e0e0" stroke-width="1.200"/><path d="M14 4 H18 L16 7 Z M14 16 H18 L16 13 Z M10 8 V12 L13 10 Z M22 8 V12 L19 10 Z"/><rect x="15.400" y="2.500" width="1.200" height="2"/><rect x="15.400" y="15.500" width="1.200" height="2"/><rect x="8.500" y="9.400" width="2" height="1.200"/><rect x="21.500" y="9.400" width="2" height="1.200"/></g>
<g transform="translate(297,0)" fill="#d8d8d8"><rect x="9" y="3" width="9" height="7" rx="1"/><path d="M18.500 5.500 L22 3.500 V9.500 L18.500 7.500 Z"/><path d="M12 14 Q17.500 8.500 23 14 Q17.500 19.500 12 14 Z"/><circle cx="17.500" cy="14" r="1.600" fill="#525252"/></g>
</svg>
<!-- orientation gizmo overlay -->
<div class="a" style="left:726px;top:156px;width:107px;height:124px;background:#181818;border-radius:4px;border:1px solid #0e0e0e"></div>
<div class="a" style="left:731px;top:163px;width:16px;height:1px;background:#555"></div><div class="a" style="left:731px;top:167px;width:16px;height:1px;background:#555"></div>
<svg style="left:726px;top:156px" width="107" height="124" viewBox="0 0 107 124">
<path d="M46 26.500 H62 L54 47 Z" fill="#86c440"/>
<ellipse cx="54" cy="26.500" rx="8" ry="1.500" fill="#98d650"/>
<circle cx="65.600" cy="46" r="4.600" fill="#3d7af0"/>
<path d="M83.500 56 L61 58 L77 72 Q84.500 66 83.500 56 Z" fill="#c84a3c"/>
<path d="M61 58 L77 72 Q73 71 71 68 Z" fill="#9c352b"/>
<path d="M31 44 L48 52 L46 60 L30 53 Q27.500 48 31 44 Z" fill="#f0f0f0"/>
<path d="M27 61 L46 58 L50 64 L36 75 Q28 72 27 61 Z" fill="#c4c4c4"/>
<ellipse cx="31.500" cy="68" rx="4.500" ry="7.500" transform="rotate(-28 31.500 68)" fill="#dcdcdc"/>
<path d="M52 66 L56 66 L58.500 74 Q54 77.500 49.500 74 Z" fill="#e6e6e6"/>
<path d="M54 45 L62.500 49.800 V59.500 L54 64.500 L45.500 59.500 V49.800 Z" fill="#d4d4d4"/>
<path d="M54 45 L62.500 49.800 L54 54.600 L45.500 49.800 Z" fill="#f4f4f4"/>
<path d="M54 54.600 L62.500 49.800 V59.500 L54 64.500 Z" fill="#b4b4b4"/>
<text x="54" y="21" font-family="Liberation Sans,sans-serif" font-weight="bold" font-size="11.500" fill="#d6d6d6" text-anchor="middle">y</text>
<text x="73" y="44" font-family="Liberation Sans,sans-serif" font-weight="bold" font-size="11.500" fill="#d6d6d6" text-anchor="middle">z</text>
<text x="87.500" y="70" font-family="Liberation Sans,sans-serif" font-weight="bold" font-size="11.500" fill="#d6d6d6" text-anchor="middle">x</text>
<path d="M84 24 V22.300 a2.200 2.200 0 0 1 4.400 0" fill="none" stroke="#d0d0d0" stroke-width="1.200"/><rect x="82.800" y="23.800" width="7.500" height="5.500" fill="#d0d0d0"/>
<path d="M38.500 101.500 L29.500 105 L38.500 108.500 M29.500 105 H38.500" stroke="#c4c4c4" stroke-width="1" fill="none"/>
</svg>
<div class="t" style="left:768px;top:253px">Persp</div>
<!-- ===== Game panel ===== -->
<div class="tab" style="left:0;top:537px;width:74px"></div>
<svg style="left:8px;top:545px" width="14" height="9" viewBox="0 0 14 9"><rect x="0" y="0.500" width="14" height="8" rx="4" fill="#c4c4c4"/><path d="M4 2.500 V6.500 M2 4.500 H6" stroke="#3c3c3c" stroke-width="1.200"/><circle cx="9.500" cy="5.500" r="0.900" fill="#3c3c3c"/><circle cx="11.500" cy="3.500" r="0.900" fill="#3c3c3c"/></svg>
<div class="t" style="left:25px;top:541px">Game</div>
<svg style="left:821px;top:543px" width="3" height="12" viewBox="0 0 3 12"><rect x="0.500" y="0.500" width="2" height="2" fill="#c4c4c4"/><rect x="0.500" y="4.500" width="2" height="2" fill="#c4c4c4"/><rect x="0.500" y="8.500" width="2" height="2" fill="#c4c4c4"/></svg>
<div class="a" style="left:0;top:561px;width:835px;height:21px;background:#3c3c3c;border-bottom:1px solid #232323"></div>
<div class="a" style="left:90px;top:561px;width:1px;height:20px;background:#232323"></div>
<div class="a" style="left:176px;top:561px;width:1px;height:20px;background:#232323"></div>
<div class="a" style="left:336px;top:561px;width:1px;height:20px;background:#232323"></div>
<div class="a" style="left:537px;top:561px;width:1px;height:20px;background:#232323"></div>
<div class="a" style="left:648px;top:561px;width:1px;height:20px;background:#232323"></div>
<div class="a" style="left:673px;top:561px;width:1px;height:20px;background:#232323"></div>
<div class="a" style="left:699px;top:561px;width:1px;height:20px;background:#232323"></div>
<div class="a" style="left:725px;top:561px;width:1px;height:20px;background:#232323"></div>
<div class="a" style="left:765px;top:561px;width:1px;height:20px;background:#232323"></div>
<div class="a" style="left:816px;top:565px;width:1px;height:12px;background:#232323"></div>
<div class="t" style="left:4px;top:563px">Game</div><div class="arr" style="left:78px;top:569px"></div>
<div class="t" style="left:100px;top:563px">Display 1</div><div class="arr" style="left:163px;top:569px"></div>
<div class="t" style="left:180px;top:563px">Full HD (1920x1080)</div><div class="arr" style="left:322px;top:569px"></div>
<div class="t" style="left:343px;top:564px">Scale</div>
<div class="a" style="left:388px;top:571px;width:102px;height:2px;background:#5a5a5a"></div>
<div class="a" style="left:380px;top:567px;width:10px;height:10px;border-radius:5px;background:#999"></div>
<div class="t" style="left:496px;top:564px">0.4x</div>
<div class="t" style="left:541px;top:563px">Play Focused</div><div class="arr" style="left:634px;top:569px"></div>
<svg style="left:652px;top:563px" width="16" height="16" viewBox="0 0 16 16"><ellipse cx="8" cy="9.300" rx="4.700" ry="5.600" fill="#c4c4c4"/><circle cx="8" cy="3.300" r="2.600" fill="#c4c4c4"/><path d="M4.200 6.500 L1.500 4.200 M11.800 6.500 L14.500 4.200 M4 9.300 H0.800 M12 9.300 H15.200 M4.500 12.500 L1.800 14.800 M11.500 12.500 L14.200 14.800" stroke="#c4c4c4" stroke-width="1.300"/></svg>
<svg style="left:679px;top:565px" width="14" height="12" viewBox="0 0 14 12"><rect x="0" y="3.500" width="2.200" height="5" fill="#c4c4c4"/><path d="M3 3.500 L7 0.500 V11.500 L3 8.500 Z" fill="#c4c4c4"/><path d="M9 3.500 Q10.500 6 9 8.500 M11 2 Q13.500 6 11 10" stroke="#c4c4c4" stroke-width="1.200" fill="none"/></svg>
<svg style="left:705px;top:566px" width="15" height="10" viewBox="0 0 15 10"><rect x="0.600" y="0.600" width="13.800" height="8.800" rx="1" fill="none" stroke="#c4c4c4" stroke-width="1.200"/><path d="M2.300 3 H12.700 M2.300 5 H12.700" stroke="#c4c4c4" stroke-width="1.100" stroke-dasharray="1.300 0.900"/><rect x="4" y="6.600" width="7" height="1.200" fill="#c4c4c4"/></svg>
<div class="t" style="left:731px;top:563px">Stats</div>
<div class="t" style="left:769px;top:563px">Gizmos</div><div class="arr" style="left:821px;top:569px"></div>
<!-- game view -->
<div class="a" style="left:0;top:582px;width:835px;height:428px;background:#282828"></div>
<svg style="left:37px;top:582px" width="761" height="428" viewBox="0 0 761 428">
<defs>
<linearGradient id="gsky" x1="0" y1="0" x2="0" y2="1"><stop offset="0" stop-color="#6f8dba"/><stop offset="0.200" stop-color="#86a3d1"/><stop offset="0.350" stop-color="#a0bce2"/><stop offset="0.450" stop-color="#c0d9ef"/><stop offset="0.505" stop-color="#e2f6fa"/><stop offset="0.535" stop-color="#dcebee"/><stop offset="0.560" stop-color="#b0b5b7"/><stop offset="0.585" stop-color="#7a7372"/><stop offset="0.620" stop-color="#6f6765"/><stop offset="1" stop-color="#6b635e"/></linearGradient>
<linearGradient id="gwall" x1="0" y1="0" x2="1" y2="0.300"><stop offset="0" stop-color="#737574"/><stop offset="0.500" stop-color="#777777"/><stop offset="1" stop-color="#787878"/></linearGradient>
<linearGradient id="gleft" x1="0" y1="0" x2="1" y2="0"><stop offset="0" stop-color="#5d6165"/><stop offset="1" stop-color="#676b6e"/></linearGradient>
<linearGradient id="gfloor" x1="0" y1="0" x2="0" y2="1"><stop offset="0" stop-color="#7f8387"/><stop offset="1" stop-color="#868a8f"/></linearGradient>
<linearGradient id="gcap" x1="0" y1="0" x2="1" y2="0"><stop offset="0" stop-color="#56616d"/><stop offset="0.070" stop-color="#69737d"/><stop offset="0.200" stop-color="#7a8088"/><stop offset="0.500" stop-color="#898a87"/><stop offset="0.850" stop-color="#818181"/><stop offset="1" stop-color="#7a7b7c"/></linearGradient>
<radialGradient id="ghl" cx="0.610" cy="0.290" r="0.380"><stop offset="0" stop-color="#c2beb0" stop-opacity="0.950"/><stop offset="0.350" stop-color="#a5a39b" stop-opacity="0.600"/><stop offset="1" stop-color="#8a8b88" stop-opacity="0"/></radialGradient>
<clipPath id="gcl"><rect width="761" height="428"/></clipPath>
</defs>
<rect width="761" height="428" fill="url(#gsky)"/>
<path d="M0 16 L54 44 V371 L0 397 Z" fill="url(#gleft)"/>
<path d="M0 397 L54 371 H707 L761 395 V428 H0 Z" fill="url(#gfloor)"/>
<rect x="54" y="44" width="653" height="327" fill="url(#gwall)"/>
<g clip-path="url(#gcl)"><path d="M307.500 428 V345.500 a73.300 73.300 0 0 1 146.600 0 V428 Z" fill="url(#gcap)"/><path d="M307.500 428 V345.500 a73.300 73.300 0 0 1 146.600 0 V428 Z" fill="url(#ghl)"/></g>
</svg>
<!-- status bar -->
<div class="a" style="left:0;top:1010px;width:1920px;height:22px;background:#141414"></div>
<div class="a" style="left:1840px;top:1011px;width:1px;height:21px;background:#262626"></div>
<div class="a" style="left:1867px;top:1011px;width:1px;height:21px;background:#262626"></div>
<div class="a" style="left:1893px;top:1011px;width:1px;height:21px;background:#262626"></div>
<svg style="left:1845px;top:1013px" width="16" height="16" viewBox="0 0 16 16"><ellipse cx="8" cy="9" rx="3.800" ry="5" fill="#c4c4c4"/><circle cx="8" cy="3.500" r="2" fill="#c4c4c4"/><path d="M4.200 6.500 L1.500 4.500 M11.800 6.500 L14.500 4.500 M4 9.300 H1 M12 9.300 H15 M4.500 12.500 L2 14.500 M11.500 12.500 L14 14.500" stroke="#c4c4c4" stroke-width="1.200"/><path d="M1.500 1.500 L14.500 15" stroke="#141414" stroke-width="2.600"/><path d="M1.500 1.500 L14.500 15" stroke="#c4c4c4" stroke-width="1.200"/></svg>
<svg style="left:1872px;top:1013px" width="16" height="16" viewBox="0 0 16 16"><ellipse cx="8" cy="4" rx="6" ry="2.800" fill="#c4c4c4"/><path d="M2 6.500 Q8 10.500 14 6.500 V8.500 Q8 12.500 2 8.500 Z M2 10.500 Q8 14.500 14 10.500 V12 Q8 16 2 12 Z" fill="#c4c4c4"/><path d="M2 2 L14.500 15" stroke="#141414" stroke-width="2.600"/><path d="M2 2 L14.500 15" stroke="#c4c4c4" stroke-width="1.200"/></svg>
<svg style="left:1899px;top:1014px" width="15" height="15" viewBox="0 0 15 15"><circle cx="7.500" cy="7.500" r="6.500" fill="none" stroke="#c4c4c4" stroke-width="1.300"/><path d="M4.300 7.800 L6.600 10 L10.800 5.200" stroke="#c4c4c4" stroke-width="1.400" fill="none"/></svg>
<!-- ===== Hierarchy ===== -->
<div class="tab" style="left:837px;top:79px;width:96px"></div>
<svg style="left:847px;top:86px" width="12" height="10" viewBox="0 0 12 10"><path d="M2 1 H11.500 M4.500 5 H11.500 M4.500 9 H11.500" stroke="#c4c4c4" stroke-width="1.200"/><path d="M1.500 0 V2 M0.500 1 H2.500" stroke="#c4c4c4" stroke-width="0.900"/><path d="M2 3.500 V9" stroke="#c4c4c4" stroke-width="1" stroke-dasharray="1 1"/><rect x="1.300" y="4.300" width="1.500" height="1.500" fill="#c4c4c4"/><rect x="1.300" y="8.300" width="1.500" height="1.500" fill="#c4c4c4"/></svg>
<div class="t " style="left:863px;top:83px;">Hierarchy</div>
<svg style="left:1435px;top:85px;margin:1px 0 0 1px" width="8.500" height="9.500" viewBox="0 0 10 11"><path d="M6.500 5 V3 a2 2 0 0 0 -4 0" fill="none" stroke="#c4c4c4" stroke-width="1.200"/><rect x="1.100" y="5.600" width="7.800" height="4.800" fill="none" stroke="#c4c4c4" stroke-width="1.200"/></svg>
<svg style="left:1456px;top:85px" width="3" height="12" viewBox="0 0 3 12"><rect x="0.500" y="0.500" width="2" height="2" fill="#c4c4c4"/><rect x="0.500" y="4.500" width="2" height="2" fill="#c4c4c4"/><rect x="0.500" y="8.500" width="2" height="2" fill="#c4c4c4"/></svg>
<div class="a" style="left:837px;top:103px;width:633px;height:21px;background:#3c3c3c;border-bottom:1px solid #232323"></div>
<svg style="left:843px;top:107px" width="26" height="13" viewBox="0 0 26 13"><path d="M6.500 0.500 V12.500 M0.500 6.500 H12.500" stroke="#d8d8d8" stroke-width="1.900"/><path d="M17.500 4.500 H25 L21.250 8.800 Z" fill="#c4c4c4"/></svg>
<div class="inp" style="left:1141px;top:105px;width:309px;height:16px;border-radius:3px 0 0 3px"></div>
<svg style="left:1146px;top:109px" width="11" height="9" viewBox="0 0 11 9"><circle cx="3.500" cy="3.500" r="2.600" fill="none" stroke="#c4c4c4" stroke-width="1.200"/><path d="M5.500 5.500 L8 8" stroke="#c4c4c4" stroke-width="1.300"/><path d="M8.500 2.500 H11 L9.750 4 Z" fill="#c4c4c4"/></svg>
<div class="t " style="left:1160px;top:105px;color:#7a7a7a">All</div>
<div class="a" style="left:1450px;top:105px;width:16px;height:16px;background:#444;border-radius:0 3px 3px 0"></div>
<svg style="left:1452px;top:106px" width="13" height="13" viewBox="0 0 13 13"><rect x="3.500" y="0.600" width="9" height="9" rx="1" fill="none" stroke="#c4c4c4" stroke-width="1.100"/><path d="M5.800 7.200 L10 3 M7 2.800 H10.200 V6" stroke="#c4c4c4" stroke-width="1.100" fill="none"/><rect x="0.600" y="8.400" width="4" height="4" fill="#3c3c3c" stroke="#c4c4c4" stroke-width="1.100"/></svg>
<div class="a" style="left:837px;top:124px;width:633px;height:25px;background:#414141"></div>
<svg style="left:843px;top:131px" width="7" height="10" viewBox="0 0 7 10"><path d="M6 0.500 L1 5 L6 9.500" stroke="#9a9a9a" stroke-width="1.300" fill="none"/></svg>
<svg style="left:1125px;top:129px" width="14" height="15" viewBox="0 0 14 15"><path d="M7 0.500 L13.500 4 L7 7.500 L0.500 4 Z" fill="#9ddcfa"/><path d="M0.500 4 L7 7.500 V14.800 L0.500 11.200 Z" fill="#5cbcec"/><path d="M13.500 4 L7 7.500 V14.800 L13.500 11.200 Z" fill="#78caf2"/><path d="M0.500 4 L7 7.500 L13.500 4 M7 7.500 V14.800" fill="none" stroke="#3a84b4" stroke-width="0.700"/></svg>
<div class="t b" style="left:1142px;top:128px;">Player</div>
<svg style="left:1456px;top:131px" width="3" height="12" viewBox="0 0 3 12"><rect x="0.500" y="0.500" width="2" height="2" fill="#c4c4c4"/><rect x="0.500" y="4.500" width="2" height="2" fill="#c4c4c4"/><rect x="0.500" y="8.500" width="2" height="2" fill="#c4c4c4"/></svg>
<div class="a" style="left:837px;top:148px;width:633px;height:388px;background:#383838"></div>
<div class="a" style="left:837px;top:148px;width:32px;height:388px;background:#303030"></div>
<div class="a" style="left:837px;top:149px;width:32px;height:16px;background:#444444"></div>
<div class="a" style="left:869px;top:149px;width:601px;height:16px;background:#4d4d4d"></div>
<svg style="left:884px;top:153px" width="10" height="8" viewBox="0 0 10 8"><path d="M0.500 0.500 H9.500 L5 7.500 Z" fill="#8a8a8a"/></svg>
<svg style="left:897px;top:149px" width="14" height="15" viewBox="0 0 14 15"><path d="M7 1 L13 4.200 V10.800 L7 14 L1 10.800 V4.200 Z M1 4.200 L7 7.500 L13 4.200 M7 7.500 V14" fill="none" stroke="#d2d2d2" stroke-width="1.150" stroke-linejoin="round"/></svg>
<div class="t " style="left:915px;top:148px;">Player</div>
<svg style="left:911px;top:165px" width="14" height="15" viewBox="0 0 14 15"><path d="M7 1 L13 4.200 V10.800 L7 14 L1 10.800 V4.200 Z M1 4.200 L7 7.500 L13 4.200 M7 7.500 V14" fill="none" stroke="#d2d2d2" stroke-width="1.150" stroke-linejoin="round"/></svg>
<div class="t " style="left:929px;top:164px;">Cinemachine Camera</div>
<svg style="left:911px;top:181px" width="14" height="15" viewBox="0 0 14 15"><path d="M7 1 L13 4.200 V10.800 L7 14 L1 10.800 V4.200 Z M1 4.200 L7 7.500 L13 4.200 M7 7.500 V14" fill="none" stroke="#d2d2d2" stroke-width="1.150" stroke-linejoin="round"/></svg>
<div class="t " style="left:929px;top:180px;">Camera Rig</div>
<!-- ===== Project ===== -->
<div class="tab" style="left:837px;top:538px;width:82px"></div>
<svg style="left:847px;top:545px" width="13" height="11" viewBox="0 0 13 11"><path d="M0 0.500 H4.500 L6 2.500 H13 V11 H0 Z" fill="#c4c4c4"/></svg>
<div class="t " style="left:863px;top:542px;">Project</div>
<svg style="left:1435px;top:544px;margin:1px 0 0 1px" width="8.500" height="9.500" viewBox="0 0 10 11"><path d="M6.500 5 V3 a2 2 0 0 0 -4 0" fill="none" stroke="#c4c4c4" stroke-width="1.200"/><rect x="1.100" y="5.600" width="7.800" height="4.800" fill="none" stroke="#c4c4c4" stroke-width="1.200"/></svg>
<svg style="left:1456px;top:544px" width="3" height="12" viewBox="0 0 3 12"><rect x="0.500" y="0.500" width="2" height="2" fill="#c4c4c4"/><rect x="0.500" y="4.500" width="2" height="2" fill="#c4c4c4"/><rect x="0.500" y="8.500" width="2" height="2" fill="#c4c4c4"/></svg>
<div class="a" style="left:837px;top:562px;width:633px;height:21px;background:#3c3c3c;border-bottom:1px solid #232323"></div>
<svg style="left:843px;top:566px" width="26" height="13" viewBox="0 0 26 13"><path d="M6.500 0.500 V12.500 M0.500 6.500 H12.500" stroke="#d8d8d8" stroke-width="1.900"/><path d="M17.500 4.500 H25 L21.250 8.800 Z" fill="#c4c4c4"/></svg>
<div class="inp" style="left:1004px;top:564px;width:319px;height:17px"></div>
<svg style="left:1008px;top:568px" width="11" height="9" viewBox="0 0 11 9"><circle cx="3.500" cy="3.500" r="2.600" fill="none" stroke="#c4c4c4" stroke-width="1.200"/><path d="M5.500 5.500 L8 8" stroke="#c4c4c4" stroke-width="1.300"/></svg>
<svg style="left:1306px;top:565px" width="13" height="13" viewBox="0 0 13 13"><rect x="3.500" y="0.600" width="9" height="9" rx="1" fill="none" stroke="#c4c4c4" stroke-width="1.100"/><path d="M5.800 7.200 L10 3 M7 2.800 H10.200 V6" stroke="#c4c4c4" stroke-width="1.100" fill="none"/><rect x="0.600" y="8.400" width="4" height="4" fill="#3c3c3c" stroke="#c4c4c4" stroke-width="1.100"/></svg>
<div class="a" style="left:1324px;top:562px;width:1px;height:20px;background:#2a2a2a"></div>
<div class="a" style="left:1350px;top:562px;width:1px;height:20px;background:#2a2a2a"></div>
<div class="a" style="left:1376px;top:562px;width:1px;height:20px;background:#2a2a2a"></div>
<div class="a" style="left:1402px;top:562px;width:1px;height:20px;background:#2a2a2a"></div>
<div class="a" style="left:1428px;top:562px;width:1px;height:20px;background:#2a2a2a"></div>
<svg style="left:1330px;top:565px" width="15" height="14" viewBox="0 0 15 14"><circle cx="4" cy="9.500" r="3.500" fill="#c4c4c4"/><rect x="2" y="0.500" width="5" height="4.500" fill="#c4c4c4"/><path d="M10 2 L14.500 10.500 H6.500 Z" fill="#c4c4c4" stroke="#3c3c3c" stroke-width="0.800"/></svg>
<svg style="left:1356px;top:566px" width="13" height="12" viewBox="0 0 13 12"><path d="M6.500 0.500 H12 V6 L6 11.500 L0.800 6.300 Z" fill="#c4c4c4"/><circle cx="9.500" cy="3" r="1.100" fill="#3c3c3c"/><path d="M3 6 L6.500 9.500" stroke="#3c3c3c" stroke-width="0.900"/></svg>
<svg style="left:1382px;top:565px" width="14" height="14" viewBox="0 0 14 14"><circle cx="7" cy="7" r="6.800" fill="#d8d8d8"/><rect x="6" y="2.800" width="2" height="5.700" fill="#3c3c3c"/><rect x="6" y="9.700" width="2" height="2" fill="#3c3c3c"/></svg>
<svg style="left:1408px;top:566px" width="13" height="12" viewBox="0 0 13 12"><path d="M6.500 0 L8.300 4.200 L12.800 4.600 L9.400 7.600 L10.400 12 L6.500 9.700 L2.600 12 L3.600 7.600 L0.200 4.600 L4.700 4.200 Z" fill="#8a8a8a"/></svg>
<svg style="left:1434px;top:568px" width="14" height="9" viewBox="0 0 14 9"><path d="M0.500 4.500 Q7 -3 13.500 4.500 Q7 12 0.500 4.500 Z" fill="none" stroke="#8a8a8a" stroke-width="1.100"/><circle cx="7" cy="4.500" r="2.200" fill="#8a8a8a"/></svg>
<div class="t " style="left:1451px;top:564px;color:#b0b0b0">25</div>
<div class="a" style="left:837px;top:583px;width:205px;height:427px;background:#333333"></div>
<div class="a" style="left:1042px;top:583px;width:12px;height:427px;background:#373737"></div>
<div class="a" style="left:1054px;top:583px;width:1px;height:427px;background:#232323"></div>
<div class="a" style="left:1044px;top:631px;width:9px;height:218px;background:#5f5f5f;border-radius:5px"></div>
<svg style="left:1044px;top:589px" width="8" height="5" viewBox="0 0 8 5"><path d="M0 5 H8 L4 0 Z" fill="#c4c4c4"/></svg>
<svg style="left:1044px;top:999px" width="8" height="5" viewBox="0 0 8 5"><path d="M0 0 H8 L4 5 Z" fill="#c4c4c4"/></svg>
<div class="a" style="left:837px;top:786px;width:205px;height:16px;background:#4d4d4d"></div>
<div class="a" style="left:837px;top:583px;width:205px;height:427px;overflow:hidden">
<svg style="left:4px;top:15px" width="10" height="8" viewBox="0 0 10 8"><path d="M0.500 0.500 H9.500 L5 7.500 Z" fill="#7a7a7a"/></svg>
<svg style="left:17px;top:13px" width="15" height="12" viewBox="0 0 15 12"><path d="M0.600 10.500 V1.500 a0.800 0.800 0 0 1 0.800 -0.800 H4.800 L6.200 2.600 H11 a0.800 0.800 0 0 1 0.800 0.800 V4.500" fill="none" stroke="#c8c8c8" stroke-width="1.150"/><path d="M3.300 4.800 H14.300 L11.800 11.400 H0.800 Z" fill="#c8c8c8"/></svg>
<div class="t b" style="left:35px;top:10px;">Assets</div>
<svg style="left:18px;top:31px" width="10" height="8" viewBox="0 0 10 8"><path d="M0.500 0.500 H9.500 L5 7.500 Z" fill="#7a7a7a"/></svg>
<svg style="left:31px;top:29px" width="15" height="12" viewBox="0 0 15 12"><path d="M0.600 10.500 V1.500 a0.800 0.800 0 0 1 0.800 -0.800 H4.800 L6.200 2.600 H11 a0.800 0.800 0 0 1 0.800 0.800 V4.500" fill="none" stroke="#c8c8c8" stroke-width="1.150"/><path d="M3.300 4.800 H14.300 L11.800 11.400 H0.800 Z" fill="#c8c8c8"/></svg>
<div class="t " style="left:48px;top:26px;">Art</div>
<svg style="left:33px;top:46px" width="8" height="10" viewBox="0 0 8 10"><path d="M0.500 0.500 V9.500 L7.500 5 Z" fill="#6e6e6e"/></svg>
<svg style="left:45px;top:45px" width="14" height="12" viewBox="0 0 14 12"><path d="M0.500 1.500 a1 1 0 0 1 1 -1 H5 L6.500 2.500 H12.500 a1 1 0 0 1 1 1 V10.500 a1 1 0 0 1 -1 1 H1.500 a1 1 0 0 1 -1 -1 Z" fill="#c8c8c8"/></svg>
<div class="t " style="left:62px;top:42px;letter-spacing:-0.57px">CHARACTRE</div>
<svg style="left:33px;top:62px" width="8" height="10" viewBox="0 0 8 10"><path d="M0.500 0.500 V9.500 L7.500 5 Z" fill="#6e6e6e"/></svg>
<svg style="left:45px;top:61px" width="14" height="12" viewBox="0 0 14 12"><path d="M0.500 1.500 a1 1 0 0 1 1 -1 H5 L6.500 2.500 H12.500 a1 1 0 0 1 1 1 V10.500 a1 1 0 0 1 -1 1 H1.500 a1 1 0 0 1 -1 -1 Z" fill="#c8c8c8"/></svg>
<div class="t " style="left:62px;top:58px;letter-spacing:-0.35px">ENVIRONMENT</div>
<svg style="left:33px;top:78px" width="8" height="10" viewBox="0 0 8 10"><path d="M0.500 0.500 V9.500 L7.500 5 Z" fill="#6e6e6e"/></svg>
<svg style="left:45px;top:77px" width="14" height="12" viewBox="0 0 14 12"><path d="M0.500 1.500 a1 1 0 0 1 1 -1 H5 L6.500 2.500 H12.500 a1 1 0 0 1 1 1 V10.500 a1 1 0 0 1 -1 1 H1.500 a1 1 0 0 1 -1 -1 Z" fill="#c8c8c8"/></svg>
<div class="t " style="left:62px;top:74px;">QuarterView 3D Action BE</div>
<svg style="left:33px;top:94px" width="8" height="10" viewBox="0 0 8 10"><path d="M0.500 0.500 V9.500 L7.500 5 Z" fill="#6e6e6e"/></svg>
<svg style="left:45px;top:93px" width="14" height="12" viewBox="0 0 14 12"><path d="M0.500 1.500 a1 1 0 0 1 1 -1 H5 L6.500 2.500 H12.500 a1 1 0 0 1 1 1 V10.500 a1 1 0 0 1 -1 1 H1.500 a1 1 0 0 1 -1 -1 Z" fill="#c8c8c8"/></svg>
<div class="t " style="left:62px;top:90px;letter-spacing:-0.49px">STRUCTURE</div>
<svg style="left:33px;top:110px" width="8" height="10" viewBox="0 0 8 10"><path d="M0.500 0.500 V9.500 L7.500 5 Z" fill="#6e6e6e"/></svg>
<svg style="left:45px;top:109px" width="14" height="12" viewBox="0 0 14 12"><path d="M0.500 1.500 a1 1 0 0 1 1 -1 H5 L6.500 2.500 H12.500 a1 1 0 0 1 1 1 V10.500 a1 1 0 0 1 -1 1 H1.500 a1 1 0 0 1 -1 -1 Z" fill="#c8c8c8"/></svg>
<div class="t " style="left:62px;top:106px;">UI</div>
<svg style="left:31px;top:125px" width="14" height="12" viewBox="0 0 14 12"><path d="M1 1.500 a0.500 0.500 0 0 1 0.500 -0.500 H5 L6.300 3 H12.500 a0.500 0.500 0 0 1 0.500 0.500 V10.500 a0.500 0.500 0 0 1 -0.500 0.500 H1.500 a0.500 0.500 0 0 1 -0.500 -0.500 Z" fill="none" stroke="#c8c8c8" stroke-width="1.100"/></svg>
<div class="t " style="left:48px;top:122px;">Audio</div>
<svg style="left:31px;top:141px" width="14" height="12" viewBox="0 0 14 12"><path d="M0.500 1.500 a1 1 0 0 1 1 -1 H5 L6.500 2.500 H12.500 a1 1 0 0 1 1 1 V10.500 a1 1 0 0 1 -1 1 H1.500 a1 1 0 0 1 -1 -1 Z" fill="#c8c8c8"/></svg>
<div class="t " style="left:48px;top:138px;">Fonts</div>
<svg style="left:19px;top:158px" width="8" height="10" viewBox="0 0 8 10"><path d="M0.500 0.500 V9.500 L7.500 5 Z" fill="#6e6e6e"/></svg>
<svg style="left:31px;top:157px" width="14" height="12" viewBox="0 0 14 12"><path d="M0.500 1.500 a1 1 0 0 1 1 -1 H5 L6.500 2.500 H12.500 a1 1 0 0 1 1 1 V10.500 a1 1 0 0 1 -1 1 H1.500 a1 1 0 0 1 -1 -1 Z" fill="#c8c8c8"/></svg>
<div class="t " style="left:48px;top:154px;">NuGet</div>
<svg style="left:19px;top:174px" width="8" height="10" viewBox="0 0 8 10"><path d="M0.500 0.500 V9.500 L7.500 5 Z" fill="#6e6e6e"/></svg>
<svg style="left:31px;top:173px" width="14" height="12" viewBox="0 0 14 12"><path d="M0.500 1.500 a1 1 0 0 1 1 -1 H5 L6.500 2.500 H12.500 a1 1 0 0 1 1 1 V10.500 a1 1 0 0 1 -1 1 H1.500 a1 1 0 0 1 -1 -1 Z" fill="#c8c8c8"/></svg>
<div class="t " style="left:48px;top:170px;">Packages</div>
<svg style="left:19px;top:190px" width="8" height="10" viewBox="0 0 8 10"><path d="M0.500 0.500 V9.500 L7.500 5 Z" fill="#6e6e6e"/></svg>
<svg style="left:31px;top:189px" width="14" height="12" viewBox="0 0 14 12"><path d="M0.500 1.500 a1 1 0 0 1 1 -1 H5 L6.500 2.500 H12.500 a1 1 0 0 1 1 1 V10.500 a1 1 0 0 1 -1 1 H1.500 a1 1 0 0 1 -1 -1 Z" fill="#c8c8c8"/></svg>
<div class="t " style="left:48px;top:186px;">Plugins</div>
<svg style="left:31px;top:205px" width="14" height="12" viewBox="0 0 14 12"><path d="M0.500 1.500 a1 1 0 0 1 1 -1 H5 L6.500 2.500 H12.500 a1 1 0 0 1 1 1 V10.500 a1 1 0 0 1 -1 1 H1.500 a1 1 0 0 1 -1 -1 Z" fill="#c8c8c8"/></svg>
<div class="t " style="left:48px;top:202px;">Prefabs</div>
<svg style="left:31px;top:221px" width="14" height="12" viewBox="0 0 14 12"><path d="M0.500 1.500 a1 1 0 0 1 1 -1 H5 L6.500 2.500 H12.500 a1 1 0 0 1 1 1 V10.500 a1 1 0 0 1 -1 1 H1.500 a1 1 0 0 1 -1 -1 Z" fill="#c8c8c8"/></svg>
<div class="t " style="left:48px;top:218px;">Scenes</div>
<svg style="left:18px;top:239px" width="10" height="8" viewBox="0 0 10 8"><path d="M0.500 0.500 H9.500 L5 7.500 Z" fill="#7a7a7a"/></svg>
<svg style="left:31px;top:237px" width="15" height="12" viewBox="0 0 15 12"><path d="M0.600 10.500 V1.500 a0.800 0.800 0 0 1 0.800 -0.800 H4.800 L6.200 2.600 H11 a0.800 0.800 0 0 1 0.800 0.800 V4.500" fill="none" stroke="#c8c8c8" stroke-width="1.150"/><path d="M3.300 4.800 H14.300 L11.800 11.400 H0.800 Z" fill="#c8c8c8"/></svg>
<div class="t " style="left:48px;top:234px;">Scripts</div>
<svg style="left:45px;top:253px" width="14" height="12" viewBox="0 0 14 12"><path d="M0.500 1.500 a1 1 0 0 1 1 -1 H5 L6.500 2.500 H12.500 a1 1 0 0 1 1 1 V10.500 a1 1 0 0 1 -1 1 H1.500 a1 1 0 0 1 -1 -1 Z" fill="#c8c8c8"/></svg>
<div class="t " style="left:62px;top:250px;">PlayerInput</div>
<svg style="left:45px;top:269px" width="14" height="12" viewBox="0 0 14 12"><path d="M0.500 1.500 a1 1 0 0 1 1 -1 H5 L6.500 2.500 H12.500 a1 1 0 0 1 1 1 V10.500 a1 1 0 0 1 -1 1 H1.500 a1 1 0 0 1 -1 -1 Z" fill="#c8c8c8"/></svg>
<div class="t " style="left:62px;top:266px;">Save&amp;Load</div>
<svg style="left:31px;top:285px" width="14" height="12" viewBox="0 0 14 12"><path d="M0.500 1.500 a1 1 0 0 1 1 -1 H5 L6.500 2.500 H12.500 a1 1 0 0 1 1 1 V10.500 a1 1 0 0 1 -1 1 H1.500 a1 1 0 0 1 -1 -1 Z" fill="#c8c8c8"/></svg>
<div class="t " style="left:48px;top:282px;">Settings</div>
<svg style="left:19px;top:302px" width="8" height="10" viewBox="0 0 8 10"><path d="M0.500 0.500 V9.500 L7.500 5 Z" fill="#6e6e6e"/></svg>
<svg style="left:31px;top:301px" width="14" height="12" viewBox="0 0 14 12"><path d="M0.500 1.500 a1 1 0 0 1 1 -1 H5 L6.500 2.500 H12.500 a1 1 0 0 1 1 1 V10.500 a1 1 0 0 1 -1 1 H1.500 a1 1 0 0 1 -1 -1 Z" fill="#c8c8c8"/></svg>
<div class="t " style="left:48px;top:298px;">TextMesh Pro</div>
<svg style="left:4px;top:319px" width="10" height="8" viewBox="0 0 10 8"><path d="M0.500 0.500 H9.500 L5 7.500 Z" fill="#7a7a7a"/></svg>
<svg style="left:17px;top:317px" width="15" height="12" viewBox="0 0 15 12"><path d="M0.600 10.500 V1.500 a0.800 0.800 0 0 1 0.800 -0.800 H4.800 L6.200 2.600 H11 a0.800 0.800 0 0 1 0.800 0.800 V4.500" fill="none" stroke="#c8c8c8" stroke-width="1.150"/><path d="M3.300 4.800 H14.300 L11.800 11.400 H0.800 Z" fill="#c8c8c8"/></svg>
<div class="t b" style="left:35px;top:314px;">Packages</div>
<svg style="left:19px;top:334px" width="8" height="10" viewBox="0 0 8 10"><path d="M0.500 0.500 V9.500 L7.500 5 Z" fill="#6e6e6e"/></svg>
<svg style="left:31px;top:333px" width="14" height="12" viewBox="0 0 14 12"><path d="M0.500 1.500 a1 1 0 0 1 1 -1 H5 L6.500 2.500 H12.500 a1 1 0 0 1 1 1 V10.500 a1 1 0 0 1 -1 1 H1.500 a1 1 0 0 1 -1 -1 Z" fill="#c8c8c8"/></svg>
<div class="t " style="left:48px;top:330px;">AI Navigation</div>
<svg style="left:19px;top:350px" width="8" height="10" viewBox="0 0 8 10"><path d="M0.500 0.500 V9.500 L7.500 5 Z" fill="#6e6e6e"/></svg>
<svg style="left:31px;top:349px" width="14" height="12" viewBox="0 0 14 12"><path d="M0.500 1.500 a1 1 0 0 1 1 -1 H5 L6.500 2.500 H12.500 a1 1 0 0 1 1 1 V10.500 a1 1 0 0 1 -1 1 H1.500 a1 1 0 0 1 -1 -1 Z" fill="#c8c8c8"/></svg>
<div class="t " style="left:48px;top:346px;">Burst</div>
<svg style="left:19px;top:366px" width="8" height="10" viewBox="0 0 8 10"><path d="M0.500 0.500 V9.500 L7.500 5 Z" fill="#6e6e6e"/></svg>
<svg style="left:31px;top:365px" width="14" height="12" viewBox="0 0 14 12"><path d="M0.500 1.500 a1 1 0 0 1 1 -1 H5 L6.500 2.500 H12.500 a1 1 0 0 1 1 1 V10.500 a1 1 0 0 1 -1 1 H1.500 a1 1 0 0 1 -1 -1 Z" fill="#c8c8c8"/></svg>
<div class="t " style="left:48px;top:362px;">Cinemachine</div>
<svg style="left:19px;top:382px" width="8" height="10" viewBox="0 0 8 10"><path d="M0.500 0.500 V9.500 L7.500 5 Z" fill="#6e6e6e"/></svg>
<svg style="left:31px;top:381px" width="14" height="12" viewBox="0 0 14 12"><path d="M0.500 1.500 a1 1 0 0 1 1 -1 H5 L6.500 2.500 H12.500 a1 1 0 0 1 1 1 V10.500 a1 1 0 0 1 -1 1 H1.500 a1 1 0 0 1 -1 -1 Z" fill="#c8c8c8"/></svg>
<div class="t " style="left:48px;top:378px;">Collections</div>
<svg style="left:19px;top:398px" width="8" height="10" viewBox="0 0 8 10"><path d="M0.500 0.500 V9.500 L7.500 5 Z" fill="#6e6e6e"/></svg>
<svg style="left:31px;top:397px" width="14" height="12" viewBox="0 0 14 12"><path d="M0.500 1.500 a1 1 0 0 1 1 -1 H5 L6.500 2.500 H12.500 a1 1 0 0 1 1 1 V10.500 a1 1 0 0 1 -1 1 H1.500 a1 1 0 0 1 -1 -1 Z" fill="#c8c8c8"/></svg>
<div class="t " style="left:48px;top:394px;">Custom NUnit</div>
<svg style="left:19px;top:414px" width="8" height="10" viewBox="0 0 8 10"><path d="M0.500 0.500 V9.500 L7.500 5 Z" fill="#6e6e6e"/></svg>
<svg style="left:31px;top:413px" width="14" height="12" viewBox="0 0 14 12"><path d="M0.500 1.500 a1 1 0 0 1 1 -1 H5 L6.500 2.500 H12.500 a1 1 0 0 1 1 1 V10.500 a1 1 0 0 1 -1 1 H1.500 a1 1 0 0 1 -1 -1 Z" fill="#c8c8c8"/></svg>
<div class="t " style="left:48px;top:410px;">Input System</div>
</div>
<div class="a" style="left:1055px;top:583px;width:415px;height:427px;background:#333333"></div>
<div class="a" style="left:1055px;top:583px;width:415px;height:21px;background:#414141"></div>
<div class="t " style="left:1059px;top:584px;">Assets</div>
<svg style="left:1104px;top:589px" width="6" height="9" viewBox="0 0 6 9"><path d="M0.800 0.500 L5 4.500 L0.800 8.500" stroke="#9a9a9a" stroke-width="1.200" fill="none"/></svg>
<div class="t b" style="left:1115px;top:584px;">Prefabs</div>
<svg style="left:1071px;top:604px" width="14" height="15" viewBox="0 0 14 15"><path d="M7 0.500 L13.500 4 L7 7.500 L0.500 4 Z" fill="#9ddcfa"/><path d="M0.500 4 L7 7.500 V14.800 L0.500 11.200 Z" fill="#5cbcec"/><path d="M13.500 4 L7 7.500 V14.800 L13.500 11.200 Z" fill="#78caf2"/><path d="M0.500 4 L7 7.500 L13.500 4 M7 7.500 V14.800" fill="none" stroke="#3a84b4" stroke-width="0.700"/></svg>
<div class="t " style="left:1089px;top:604px;">Capsule</div>
<svg style="left:1071px;top:620px" width="14" height="15" viewBox="0 0 14 15"><path d="M7 0.500 L13.500 4 L7 7.500 L0.500 4 Z" fill="#9ddcfa"/><path d="M0.500 4 L7 7.500 V14.800 L0.500 11.200 Z" fill="#5cbcec"/><path d="M13.500 4 L7 7.500 V14.800 L13.500 11.200 Z" fill="#78caf2"/><path d="M0.500 4 L7 7.500 L13.500 4 M7 7.500 V14.800" fill="none" stroke="#3a84b4" stroke-width="0.700"/></svg>
<div class="t " style="left:1089px;top:620px;">Cube</div>
<svg style="left:1071px;top:636px" width="14" height="15" viewBox="0 0 14 15"><path d="M7 0.500 L13.500 4 L7 7.500 L0.500 4 Z" fill="#9ddcfa"/><path d="M0.500 4 L7 7.500 V14.800 L0.500 11.200 Z" fill="#5cbcec"/><path d="M13.500 4 L7 7.500 V14.800 L13.500 11.200 Z" fill="#78caf2"/><path d="M0.500 4 L7 7.500 L13.500 4 M7 7.500 V14.800" fill="none" stroke="#3a84b4" stroke-width="0.700"/></svg>
<div class="t " style="left:1089px;top:636px;">Player</div>
<svg style="left:1071px;top:652px" width="14" height="15" viewBox="0 0 14 15"><path d="M7 0.500 L13.500 4 L7 7.500 L0.500 4 Z" fill="#9ddcfa"/><path d="M0.500 4 L7 7.500 V14.800 L0.500 11.200 Z" fill="#5cbcec"/><path d="M13.500 4 L7 7.500 V14.800 L13.500 11.200 Z" fill="#78caf2"/><path d="M0.500 4 L7 7.500 L13.500 4 M7 7.500 V14.800" fill="none" stroke="#3a84b4" stroke-width="0.700"/></svg>
<div class="t " style="left:1089px;top:652px;">Sphere</div>
<div class="a" style="left:1055px;top:989px;width:415px;height:21px;background:#424242"></div>
<div class="a" style="left:1408px;top:999px;width:46px;height:2px;background:#6a6a6a"></div>
<div class="a" style="left:1399px;top:995px;width:10px;height:10px;border-radius:5px;background:#a2a2a2"></div>
<!-- ===== Inspector ===== -->
<div class="tab" style="left:1472px;top:79px;width:95px"></div>
<svg style="left:1483px;top:86px" width="11" height="11" viewBox="0 0 11 11"><circle cx="5.500" cy="5.500" r="5.300" fill="#c4c4c4"/><rect x="4.700" y="4.600" width="1.700" height="4" fill="#3c3c3c"/><rect x="4.700" y="2.200" width="1.700" height="1.600" fill="#3c3c3c"/></svg>
<div class="t " style="left:1498px;top:83px;">Inspector</div>
<svg style="left:1578px;top:86px" width="11" height="11" viewBox="0 0 11 11"><rect x="0" y="0" width="11" height="11" rx="1" fill="#c4c4c4"/><path d="M2 3 H9 M2 5.500 H9 M2 8 H9" stroke="#141414" stroke-width="1.100"/></svg>
<div class="t " style="left:1593px;top:83px;">Console</div>
<svg style="left:1884px;top:85px;margin:1px 0 0 1px" width="8.500" height="9.500" viewBox="0 0 10 11"><path d="M6.500 5 V3 a2 2 0 0 0 -4 0" fill="none" stroke="#c4c4c4" stroke-width="1.200"/><rect x="1.100" y="5.600" width="7.800" height="4.800" fill="none" stroke="#c4c4c4" stroke-width="1.200"/></svg>
<svg style="left:1906px;top:85px" width="3" height="12" viewBox="0 0 3 12"><rect x="0.500" y="0.500" width="2" height="2" fill="#c4c4c4"/><rect x="0.500" y="4.500" width="2" height="2" fill="#c4c4c4"/><rect x="0.500" y="8.500" width="2" height="2" fill="#c4c4c4"/></svg>
<div class="a" style="left:1472px;top:103px;width:448px;height:907px;background:#383838"></div>
<div class="a" style="left:1472px;top:103px;width:448px;height:59px;background:#3c3c3c"></div>
<svg style="left:1480px;top:112px" width="28" height="30" viewBox="0 0 28 30"><path d="M10.500 1.500 L19.500 6.200 V16.800 L10.500 21.500 L1.500 16.800 V6.200 Z M1.500 6.200 L10.500 11 L19.500 6.200 M10.500 11 V21.500" fill="none" stroke="#d2d2d2" stroke-width="1.400" stroke-linejoin="round"/><path d="M18 22 H24 L21 25.500 Z" fill="#c4c4c4"/></svg>
<div class="chk" style="left:1517px;top:114px"></div>
<svg style="left:1519px;top:117px" width="10" height="8" viewBox="0 0 10 8"><path d="M1 4 L3.800 6.800 L9 1" stroke="#e4e4e4" stroke-width="1.500" fill="none"/></svg>
<div class="inp" style="left:1537px;top:112px;width:302px;height:18px"></div>
<div class="t b" style="left:1540px;top:113px;">Player</div>
<div class="chk" style="left:1844px;top:114px;background:#303030"></div>
<div class="t " style="left:1861px;top:113px;color:#9a9a9a">Static</div>
<div class="arr" style="left:1906px;top:119px;border-left-width:4px;border-right-width:4px"></div>
<div class="t " style="left:1512px;top:137px;color:#9a9a9a">Tag</div>
<div class="dd" style="left:1537px;top:136px;width:170px"></div>
<div class="t " style="left:1540px;top:136px;">Player</div>
<div class="arr" style="left:1692px;top:142px;border-left-width:4px;border-right-width:4px"></div>
<div class="t " style="left:1721px;top:137px;color:#9a9a9a">Layer</div>
<div class="dd" style="left:1757px;top:136px;width:159px"></div>
<div class="t " style="left:1760px;top:136px;">Default</div>
<div class="arr" style="left:1901px;top:142px;border-left-width:4px;border-right-width:4px"></div>
<div class="hdr" style="top:162px"></div>
<svg style="left:1478px;top:170px" width="10" height="8" viewBox="0 0 10 8"><path d="M0.500 0.500 H9.500 L5 7.500 Z" fill="#7a7a7a"/></svg>
<svg style="left:1493px;top:166px" width="14" height="14" viewBox="0 0 14 14"><path d="M7 7.500 V1.500" stroke="#9ae04a" stroke-width="1.800"/><path d="M7 7.500 L1.500 11.500" stroke="#4ab8f0" stroke-width="1.800"/><path d="M7 7.500 L12.500 11.500" stroke="#f0643c" stroke-width="1.800"/></svg>
<div class="t b" style="left:1532px;top:165px;">Transform</div>
<svg style="left:1861px;top:168px" width="11" height="11" viewBox="0 0 11 11"><circle cx="5.500" cy="5.500" r="5.300" fill="#c4c4c4"/><text x="5.500" y="8.800" text-anchor="middle" font-family="Liberation Sans,sans-serif" font-weight="bold" font-size="9" fill="#3e3e3e">?</text></svg>
<svg style="left:1881px;top:168px" width="11" height="10" viewBox="0 0 11 10"><path d="M0 2.500 H6 M8.500 2.500 H11 M0 7.500 H2.500 M5 7.500 H11" stroke="#c4c4c4" stroke-width="1.200"/><path d="M7 0 V5 M3.800 5 V10" stroke="#c4c4c4" stroke-width="1.300"/></svg>
<svg style="left:1906px;top:167px" width="3" height="12" viewBox="0 0 3 12"><rect x="0.500" y="0.500" width="2" height="2" fill="#c4c4c4"/><rect x="0.500" y="4.500" width="2" height="2" fill="#c4c4c4"/><rect x="0.500" y="8.500" width="2" height="2" fill="#c4c4c4"/></svg>
<div class="t " style="left:1491px;top:189px;">Position</div>
<div class="t " style="left:1655px;top:189px;">X</div>
<div class="inp" style="left:1669px;top:188px;width:69px"></div>
<div class="t " style="left:1672px;top:189px;">0</div>
<div class="t " style="left:1744px;top:189px;">Y</div>
<div class="inp" style="left:1758px;top:188px;width:69px"></div>
<div class="t " style="left:1761px;top:189px;">1</div>
<div class="t " style="left:1832px;top:189px;">Z</div>
<div class="inp" style="left:1847px;top:188px;width:69px"></div>
<div class="t " style="left:1850px;top:189px;">0</div>
<div class="t " style="left:1491px;top:209px;">Rotation</div>
<div class="t " style="left:1655px;top:209px;">X</div>
<div class="inp" style="left:1669px;top:208px;width:69px"></div>
<div class="t " style="left:1672px;top:209px;">0</div>
<div class="t " style="left:1744px;top:209px;">Y</div>
<div class="inp" style="left:1758px;top:208px;width:69px"></div>
<div class="t " style="left:1761px;top:209px;">0</div>
<div class="t " style="left:1832px;top:209px;">Z</div>
<div class="inp" style="left:1847px;top:208px;width:69px"></div>
<div class="t " style="left:1850px;top:209px;">0</div>
<div class="t " style="left:1491px;top:229px;">Scale</div>
<div class="t " style="left:1655px;top:229px;">X</div>
<div class="inp" style="left:1669px;top:228px;width:69px"></div>
<div class="t " style="left:1672px;top:229px;">1</div>
<div class="t " style="left:1744px;top:229px;">Y</div>
<div class="inp" style="left:1758px;top:228px;width:69px"></div>
<div class="t " style="left:1761px;top:229px;">1</div>
<div class="t " style="left:1832px;top:229px;">Z</div>
<div class="inp" style="left:1847px;top:228px;width:69px"></div>
<div class="t " style="left:1850px;top:229px;">1</div>
<svg style="left:1632px;top:232px" width="14" height="11" viewBox="0 0 14 11"><path d="M5.500 2.500 H4 a3 3 0 0 0 0 6 H6 M8 2.500 H10 a3 3 0 0 1 0 6 H8.500" fill="none" stroke="#c4c4c4" stroke-width="1.200"/><path d="M2 0.500 L12 10.500" stroke="#c4c4c4" stroke-width="1.200"/></svg>
<div class="hdr" style="top:255px"></div>
<svg style="left:1480px;top:261px" width="8" height="10" viewBox="0 0 8 10"><path d="M0.500 0.500 V9.500 L7.500 5 Z" fill="#6e6e6e"/></svg>
<svg style="left:1493px;top:259px" width="14" height="14" viewBox="0 0 14 14"><path d="M0.600 0.600 H13.400 V13.400 H0.600 Z M0.600 5 H13.400 M0.600 9.200 H13.400 M5 0.600 V13.400 M9.200 0.600 V13.400" fill="none" stroke="#7fd0f8" stroke-width="1.200"/></svg>
<div class="t b" style="left:1532px;top:258px;">Capsule (Mesh Filter)</div>
<svg style="left:1861px;top:261px" width="11" height="11" viewBox="0 0 11 11"><circle cx="5.500" cy="5.500" r="5.300" fill="#c4c4c4"/><text x="5.500" y="8.800" text-anchor="middle" font-family="Liberation Sans,sans-serif" font-weight="bold" font-size="9" fill="#3e3e3e">?</text></svg>
<svg style="left:1881px;top:261px" width="11" height="10" viewBox="0 0 11 10"><path d="M0 2.500 H6 M8.500 2.500 H11 M0 7.500 H2.500 M5 7.500 H11" stroke="#c4c4c4" stroke-width="1.200"/><path d="M7 0 V5 M3.800 5 V10" stroke="#c4c4c4" stroke-width="1.300"/></svg>
<svg style="left:1906px;top:260px" width="3" height="12" viewBox="0 0 3 12"><rect x="0.500" y="0.500" width="2" height="2" fill="#c4c4c4"/><rect x="0.500" y="4.500" width="2" height="2" fill="#c4c4c4"/><rect x="0.500" y="8.500" width="2" height="2" fill="#c4c4c4"/></svg>
<div class="hdr" style="top:277px"></div>
<svg style="left:1480px;top:283px" width="8" height="10" viewBox="0 0 8 10"><path d="M0.500 0.500 V9.500 L7.500 5 Z" fill="#6e6e6e"/></svg>
<svg style="left:1493px;top:281px" width="15" height="15" viewBox="0 0 15 15"><path d="M0.600 0.600 H13.400 V7 M0.600 0.600 V12 H5 M0.600 4.600 H13.400 M0.600 8.600 H6 M4.800 0.600 V12 M9 0.600 V7" fill="none" stroke="#7fd0f8" stroke-width="1.200"/><path d="M5.500 11.500 Q10 6.500 14.500 11.500 Q10 16 5.500 11.500 Z" fill="#d8d8d8"/><circle cx="10" cy="11.500" r="1.500" fill="#3e3e3e"/></svg>
<div class="chk" style="left:1512px;top:281px"></div>
<svg style="left:1514px;top:284px" width="10" height="8" viewBox="0 0 10 8"><path d="M1 4 L3.800 6.800 L9 1" stroke="#e4e4e4" stroke-width="1.500" fill="none"/></svg>
<div class="t b" style="left:1532px;top:280px;">Mesh Renderer</div>
<svg style="left:1861px;top:283px" width="11" height="11" viewBox="0 0 11 11"><circle cx="5.500" cy="5.500" r="5.300" fill="#c4c4c4"/><text x="5.500" y="8.800" text-anchor="middle" font-family="Liberation Sans,sans-serif" font-weight="bold" font-size="9" fill="#3e3e3e">?</text></svg>
<svg style="left:1881px;top:283px" width="11" height="10" viewBox="0 0 11 10"><path d="M0 2.500 H6 M8.500 2.500 H11 M0 7.500 H2.500 M5 7.500 H11" stroke="#c4c4c4" stroke-width="1.200"/><path d="M7 0 V5 M3.800 5 V10" stroke="#c4c4c4" stroke-width="1.300"/></svg>
<svg style="left:1906px;top:282px" width="3" height="12" viewBox="0 0 3 12"><rect x="0.500" y="0.500" width="2" height="2" fill="#c4c4c4"/><rect x="0.500" y="4.500" width="2" height="2" fill="#c4c4c4"/><rect x="0.500" y="8.500" width="2" height="2" fill="#c4c4c4"/></svg>
<div class="hdr" style="top:299px"></div>
<svg style="left:1480px;top:305px" width="8" height="10" viewBox="0 0 8 10"><path d="M0.500 0.500 V9.500 L7.500 5 Z" fill="#6e6e6e"/></svg>
<svg style="left:1493px;top:303px" width="14" height="14" viewBox="0 0 14 14"><rect x="3.800" y="0.500" width="6.400" height="11" rx="3.200" fill="#a4f04a"/><path d="M0.500 3.500 V0.500 H3 M13.500 3.500 V0.500 H11 M0.500 10.500 V13.500 H3.500 L5.500 11.500 M13.500 10.500 V13.500 H10.500 L8.500 11.500" fill="none" stroke="#a4f04a" stroke-width="1.300"/></svg>
<div class="chk" style="left:1512px;top:303px"></div>
<svg style="left:1514px;top:306px" width="10" height="8" viewBox="0 0 10 8"><path d="M1 4 L3.800 6.800 L9 1" stroke="#e4e4e4" stroke-width="1.500" fill="none"/></svg>
<div class="t b" style="left:1532px;top:302px;">Character Controller</div>
<svg style="left:1861px;top:305px" width="11" height="11" viewBox="0 0 11 11"><circle cx="5.500" cy="5.500" r="5.300" fill="#c4c4c4"/><text x="5.500" y="8.800" text-anchor="middle" font-family="Liberation Sans,sans-serif" font-weight="bold" font-size="9" fill="#3e3e3e">?</text></svg>
<svg style="left:1881px;top:305px" width="11" height="10" viewBox="0 0 11 10"><path d="M0 2.500 H6 M8.500 2.500 H11 M0 7.500 H2.500 M5 7.500 H11" stroke="#c4c4c4" stroke-width="1.200"/><path d="M7 0 V5 M3.800 5 V10" stroke="#c4c4c4" stroke-width="1.300"/></svg>
<svg style="left:1906px;top:304px" width="3" height="12" viewBox="0 0 3 12"><rect x="0.500" y="0.500" width="2" height="2" fill="#c4c4c4"/><rect x="0.500" y="4.500" width="2" height="2" fill="#c4c4c4"/><rect x="0.500" y="8.500" width="2" height="2" fill="#c4c4c4"/></svg>
<div class="hdr" style="top:321px"></div>
<svg style="left:1480px;top:327px" width="8" height="10" viewBox="0 0 8 10"><path d="M0.500 0.500 V9.500 L7.500 5 Z" fill="#6e6e6e"/></svg>
<svg style="left:1493px;top:325px" width="14" height="14" viewBox="0 0 14 14"><rect x="3" y="0" width="8" height="14" rx="4" fill="#a4f04a"/><path d="M7 0 V14 M3 7.500 H11" stroke="#3a6a14" stroke-width="1"/></svg>
<div class="chk" style="left:1512px;top:325px"></div>
<svg style="left:1514px;top:328px" width="10" height="8" viewBox="0 0 10 8"><path d="M1 4 L3.800 6.800 L9 1" stroke="#e4e4e4" stroke-width="1.500" fill="none"/></svg>
<div class="t b" style="left:1532px;top:324px;">Capsule Collider</div>
<svg style="left:1861px;top:327px" width="11" height="11" viewBox="0 0 11 11"><circle cx="5.500" cy="5.500" r="5.300" fill="#c4c4c4"/><text x="5.500" y="8.800" text-anchor="middle" font-family="Liberation Sans,sans-serif" font-weight="bold" font-size="9" fill="#3e3e3e">?</text></svg>
<svg style="left:1881px;top:327px" width="11" height="10" viewBox="0 0 11 10"><path d="M0 2.500 H6 M8.500 2.500 H11 M0 7.500 H2.500 M5 7.500 H11" stroke="#c4c4c4" stroke-width="1.200"/><path d="M7 0 V5 M3.800 5 V10" stroke="#c4c4c4" stroke-width="1.300"/></svg>
<svg style="left:1906px;top:326px" width="3" height="12" viewBox="0 0 3 12"><rect x="0.500" y="0.500" width="2" height="2" fill="#c4c4c4"/><rect x="0.500" y="4.500" width="2" height="2" fill="#c4c4c4"/><rect x="0.500" y="8.500" width="2" height="2" fill="#c4c4c4"/></svg>
<div class="hdr" style="top:343px"></div>
<svg style="left:1478px;top:351px" width="10" height="8" viewBox="0 0 10 8"><path d="M0.500 0.500 H9.500 L5 7.500 Z" fill="#7a7a7a"/></svg>
<svg style="left:1493px;top:347px" width="14" height="14" viewBox="0 0 14 14"><circle cx="7" cy="7" r="6.800" fill="#f4f4f4"/><path d="M8.300 1.800 L4.300 7.600 H6.800 L5.700 12.200 L9.800 6.200 H7.300 Z" fill="#1e9ae0"/></svg>
<div class="chk" style="left:1512px;top:347px"></div>
<svg style="left:1514px;top:350px" width="10" height="8" viewBox="0 0 10 8"><path d="M1 4 L3.800 6.800 L9 1" stroke="#e4e4e4" stroke-width="1.500" fill="none"/></svg>
<div class="t b" style="left:1532px;top:346px;">Player Input</div>
<svg style="left:1861px;top:349px" width="11" height="11" viewBox="0 0 11 11"><circle cx="5.500" cy="5.500" r="5.300" fill="#c4c4c4"/><text x="5.500" y="8.800" text-anchor="middle" font-family="Liberation Sans,sans-serif" font-weight="bold" font-size="9" fill="#3e3e3e">?</text></svg>
<svg style="left:1881px;top:349px" width="11" height="10" viewBox="0 0 11 10"><path d="M0 2.500 H6 M8.500 2.500 H11 M0 7.500 H2.500 M5 7.500 H11" stroke="#c4c4c4" stroke-width="1.200"/><path d="M7 0 V5 M3.800 5 V10" stroke="#c4c4c4" stroke-width="1.300"/></svg>
<svg style="left:1906px;top:348px" width="3" height="12" viewBox="0 0 3 12"><rect x="0.500" y="0.500" width="2" height="2" fill="#c4c4c4"/><rect x="0.500" y="4.500" width="2" height="2" fill="#c4c4c4"/><rect x="0.500" y="8.500" width="2" height="2" fill="#c4c4c4"/></svg>
<div class="a" style="left:1472px;top:365px;width:448px;height:1px;background:#303030"></div>
<div class="t " style="left:1491px;top:370px;">Actions</div>
<div class="inp" style="left:1654px;top:369px;width:262px"></div>
<div class="a" style="left:1896px;top:370px;width:19px;height:16px;background:#383838;border-radius:0 2px 2px 0"></div>
<svg style="left:1900px;top:372px" width="11" height="11" viewBox="0 0 11 11"><circle cx="5.500" cy="5.500" r="4.700" fill="none" stroke="#c4c4c4" stroke-width="1.100"/><circle cx="5.500" cy="5.500" r="1.900" fill="#c4c4c4"/></svg>
<svg style="left:1658px;top:372px" width="12" height="12" viewBox="0 0 12 12"><path d="M2 9 Q-0.500 4 3.500 1.500 Q7.500 0 9.500 3.500 M3.500 1.800 V7.500 H7" fill="none" stroke="#5aa8d8" stroke-width="1.100"/><path d="M7.500 6.500 V10.500 H10 V6.500 M11.500 7 V10" fill="none" stroke="#e8603c" stroke-width="1.100"/></svg>
<div class="t " style="left:1670px;top:370px;letter-spacing:0.18px">PlayerInputAssets (Input Action Asset)</div>
<div class="t " style="left:1506px;top:390px;">Default Scheme</div>
<div class="dd" style="left:1654px;top:389px;width:262px"></div>
<div class="t " style="left:1657px;top:389px;">PC</div>
<div class="arr" style="left:1901px;top:395px;border-left-width:4px;border-right-width:4px"></div>
<div class="t " style="left:1506px;top:410px;">Auto-Switch</div>
<div class="chk" style="left:1654px;top:411px"></div>
<svg style="left:1656px;top:414px" width="10" height="8" viewBox="0 0 10 8"><path d="M1 4 L3.800 6.800 L9 1" stroke="#e4e4e4" stroke-width="1.500" fill="none"/></svg>
<div class="t " style="left:1506px;top:430px;">Default Map</div>
<div class="dd" style="left:1654px;top:429px;width:262px"></div>
<div class="t " style="left:1657px;top:429px;">Player</div>
<div class="arr" style="left:1901px;top:435px;border-left-width:4px;border-right-width:4px"></div>
<div class="t " style="left:1491px;top:450px;">UI Input Module</div>
<div class="inp" style="left:1654px;top:449px;width:262px"></div>
<div class="a" style="left:1896px;top:450px;width:19px;height:16px;background:#383838;border-radius:0 2px 2px 0"></div>
<svg style="left:1900px;top:452px" width="11" height="11" viewBox="0 0 11 11"><circle cx="5.500" cy="5.500" r="4.700" fill="none" stroke="#c4c4c4" stroke-width="1.100"/><circle cx="5.500" cy="5.500" r="1.900" fill="#c4c4c4"/></svg>
<div class="t " style="left:1657px;top:450px;color:#9c9c9c;letter-spacing:0.13px">None (Input System UI Input Module)</div>
<div class="t " style="left:1491px;top:470px;">Camera</div>
<div class="inp" style="left:1654px;top:469px;width:262px"></div>
<div class="a" style="left:1896px;top:470px;width:19px;height:16px;background:#383838;border-radius:0 2px 2px 0"></div>
<svg style="left:1900px;top:472px" width="11" height="11" viewBox="0 0 11 11"><circle cx="5.500" cy="5.500" r="4.700" fill="none" stroke="#c4c4c4" stroke-width="1.100"/><circle cx="5.500" cy="5.500" r="1.900" fill="#c4c4c4"/></svg>
<div class="t " style="left:1657px;top:470px;color:#9c9c9c">None (Camera)</div>
<div class="t " style="left:1491px;top:490px;">Behavior</div>
<div class="dd" style="left:1654px;top:489px;width:262px"></div>
<div class="t " style="left:1657px;top:489px;">Invoke Unity Events</div>
<div class="arr" style="left:1901px;top:495px;border-left-width:4px;border-right-width:4px"></div>
<svg style="left:1480px;top:513px" width="8" height="10" viewBox="0 0 8 10"><path d="M0.500 0.500 V9.500 L7.500 5 Z" fill="#6e6e6e"/></svg>
<div class="t " style="left:1491px;top:510px;">Events</div>
<div class="a" style="left:1491px;top:528px;width:205px;height:16px;background:#585858;border-radius:2px;border-bottom:1px solid #2a2a2a"></div>
<div class="t " style="left:1537px;top:527px;">Open Input Settings</div>
<div class="a" style="left:1700px;top:528px;width:215px;height:16px;background:#585858;border-radius:2px;border-bottom:1px solid #2a2a2a"></div>
<div class="t " style="left:1746px;top:527px;">Open Input Debugger</div>
<div class="hdr" style="top:552px"></div>
<svg style="left:1478px;top:560px" width="10" height="8" viewBox="0 0 10 8"><path d="M0.500 0.500 H9.500 L5 7.500 Z" fill="#7a7a7a"/></svg>
<svg style="left:1493px;top:556px" width="13" height="15" viewBox="0 0 13 15"><path d="M0.500 1.500 a1 1 0 0 1 1 -1 H8.500 L12.500 4.500 V13.500 a1 1 0 0 1 -1 1 H1.500 a1 1 0 0 1 -1 -1 Z" fill="#f0f0f0"/><path d="M4.800 4.500 L4 11.500 M8.300 4.500 L7.500 11.500 M2.800 6.500 H10 M2.500 9.500 H9.700" stroke="#2e8a3c" stroke-width="1.200"/></svg>
<div class="chk" style="left:1512px;top:556px"></div>
<svg style="left:1514px;top:559px" width="10" height="8" viewBox="0 0 10 8"><path d="M1 4 L3.800 6.800 L9 1" stroke="#e4e4e4" stroke-width="1.500" fill="none"/></svg>
<div class="t b" style="left:1532px;top:555px;">Player Controller (Script)</div>
<svg style="left:1861px;top:558px" width="11" height="11" viewBox="0 0 11 11"><circle cx="5.500" cy="5.500" r="5.300" fill="#c4c4c4"/><text x="5.500" y="8.800" text-anchor="middle" font-family="Liberation Sans,sans-serif" font-weight="bold" font-size="9" fill="#3e3e3e">?</text></svg>
<svg style="left:1881px;top:558px" width="11" height="10" viewBox="0 0 11 10"><path d="M0 2.500 H6 M8.500 2.500 H11 M0 7.500 H2.500 M5 7.500 H11" stroke="#c4c4c4" stroke-width="1.200"/><path d="M7 0 V5 M3.800 5 V10" stroke="#c4c4c4" stroke-width="1.300"/></svg>
<svg style="left:1906px;top:557px" width="3" height="12" viewBox="0 0 3 12"><rect x="0.500" y="0.500" width="2" height="2" fill="#c4c4c4"/><rect x="0.500" y="4.500" width="2" height="2" fill="#c4c4c4"/><rect x="0.500" y="8.500" width="2" height="2" fill="#c4c4c4"/></svg>
<div class="t " style="left:1491px;top:578px;color:#8a8a8a">Script</div>
<div class="inp" style="left:1654px;top:577px;width:262px;background:#313131;border-color:#2a2a2a"></div>
<div class="a" style="left:1896px;top:578px;width:19px;height:16px;background:#353535;border-radius:0 2px 2px 0"></div>
<svg style="left:1900px;top:580px" width="11" height="11" viewBox="0 0 11 11"><circle cx="5.500" cy="5.500" r="4.700" fill="none" stroke="#8a8a8a" stroke-width="1.100"/><circle cx="5.500" cy="5.500" r="1.900" fill="#8a8a8a"/></svg>
<svg style="left:1658px;top:580px" width="10" height="11" viewBox="0 0 10 11"><path d="M0.500 1 a0.800 0.800 0 0 1 0.800 -0.800 H6.500 L9.500 3.200 V10 a0.800 0.800 0 0 1 -0.800 0.800 H1.300 a0.800 0.800 0 0 1 -0.800 -0.800 Z" fill="#9a9f9a"/><path d="M3.800 3.500 L3.300 8.500 M6.300 3.500 L5.800 8.500 M2.300 4.800 H7.600 M2 7.200 H7.300" stroke="#3e6e46" stroke-width="0.900"/></svg>
<div class="t " style="left:1671px;top:578px;color:#8a8a8a">PlayerController</div>
<div class="hdr" style="top:603px"></div>
<svg style="left:1478px;top:611px" width="10" height="8" viewBox="0 0 10 8"><path d="M0.500 0.500 H9.500 L5 7.500 Z" fill="#7a7a7a"/></svg>
<svg style="left:1493px;top:607px" width="13" height="15" viewBox="0 0 13 15"><path d="M0.500 1.500 a1 1 0 0 1 1 -1 H8.500 L12.500 4.500 V13.500 a1 1 0 0 1 -1 1 H1.500 a1 1 0 0 1 -1 -1 Z" fill="#f0f0f0"/><path d="M4.800 4.500 L4 11.500 M8.300 4.500 L7.500 11.500 M2.800 6.500 H10 M2.500 9.500 H9.700" stroke="#2e8a3c" stroke-width="1.200"/></svg>
<div class="chk" style="left:1512px;top:607px"></div>
<svg style="left:1514px;top:610px" width="10" height="8" viewBox="0 0 10 8"><path d="M1 4 L3.800 6.800 L9 1" stroke="#e4e4e4" stroke-width="1.500" fill="none"/></svg>
<div class="t b" style="left:1532px;top:606px;">Player Camera (Script)</div>
<svg style="left:1861px;top:609px" width="11" height="11" viewBox="0 0 11 11"><circle cx="5.500" cy="5.500" r="5.300" fill="#c4c4c4"/><text x="5.500" y="8.800" text-anchor="middle" font-family="Liberation Sans,sans-serif" font-weight="bold" font-size="9" fill="#3e3e3e">?</text></svg>
<svg style="left:1881px;top:609px" width="11" height="10" viewBox="0 0 11 10"><path d="M0 2.500 H6 M8.500 2.500 H11 M0 7.500 H2.500 M5 7.500 H11" stroke="#c4c4c4" stroke-width="1.200"/><path d="M7 0 V5 M3.800 5 V10" stroke="#c4c4c4" stroke-width="1.300"/></svg>
<svg style="left:1906px;top:608px" width="3" height="12" viewBox="0 0 3 12"><rect x="0.500" y="0.500" width="2" height="2" fill="#c4c4c4"/><rect x="0.500" y="4.500" width="2" height="2" fill="#c4c4c4"/><rect x="0.500" y="8.500" width="2" height="2" fill="#c4c4c4"/></svg>
<div class="t " style="left:1491px;top:629px;color:#8a8a8a">Script</div>
<div class="inp" style="left:1654px;top:628px;width:262px;background:#313131;border-color:#2a2a2a"></div>
<div class="a" style="left:1896px;top:629px;width:19px;height:16px;background:#353535;border-radius:0 2px 2px 0"></div>
<svg style="left:1900px;top:631px" width="11" height="11" viewBox="0 0 11 11"><circle cx="5.500" cy="5.500" r="4.700" fill="none" stroke="#8a8a8a" stroke-width="1.100"/><circle cx="5.500" cy="5.500" r="1.900" fill="#8a8a8a"/></svg>
<svg style="left:1658px;top:631px" width="10" height="11" viewBox="0 0 10 11"><path d="M0.500 1 a0.800 0.800 0 0 1 0.800 -0.800 H6.500 L9.500 3.200 V10 a0.800 0.800 0 0 1 -0.800 0.800 H1.300 a0.800 0.800 0 0 1 -0.800 -0.800 Z" fill="#9a9f9a"/><path d="M3.800 3.500 L3.300 8.500 M6.300 3.500 L5.800 8.500 M2.300 4.800 H7.600 M2 7.200 H7.300" stroke="#3e6e46" stroke-width="0.900"/></svg>
<div class="t " style="left:1671px;top:629px;color:#8a8a8a;letter-spacing:-0.04px">PlayerCamera</div>
<div class="t " style="left:1491px;top:649px;">Rotation Speed</div>
<div class="inp" style="left:1654px;top:648px;width:262px"></div>
<div class="t " style="left:1659px;top:649px;">50</div>
<div class="t " style="left:1491px;top:669px;">Rotation Limit</div>
<div class="inp" style="left:1654px;top:668px;width:262px"></div>
<div class="t " style="left:1659px;top:669px;">80</div>
<div class="t " style="left:1491px;top:689px;">Camera Transform</div>
<div class="inp" style="left:1654px;top:688px;width:262px"></div>
<div class="a" style="left:1896px;top:689px;width:19px;height:16px;background:#383838;border-radius:0 2px 2px 0"></div>
<svg style="left:1900px;top:691px" width="11" height="11" viewBox="0 0 11 11"><circle cx="5.500" cy="5.500" r="4.700" fill="none" stroke="#c4c4c4" stroke-width="1.100"/><circle cx="5.500" cy="5.500" r="1.900" fill="#c4c4c4"/></svg>
<svg style="left:1658px;top:691px" width="11" height="11" viewBox="0 0 11 11"><path d="M5.500 6 V1" stroke="#9ae04a" stroke-width="1.500"/><path d="M5.500 6 L1 9.500" stroke="#4ab8f0" stroke-width="1.500"/><path d="M5.500 6 L10 9.500" stroke="#f0643c" stroke-width="1.500"/></svg>
<div class="t " style="left:1671px;top:689px;letter-spacing:0.03px">Camera Rig (Transform)</div>
<div class="hdr" style="top:714px"></div>
<svg style="left:1478px;top:722px" width="10" height="8" viewBox="0 0 10 8"><path d="M0.500 0.500 H9.500 L5 7.500 Z" fill="#7a7a7a"/></svg>
<svg style="left:1493px;top:718px" width="13" height="15" viewBox="0 0 13 15"><path d="M0.500 1.500 a1 1 0 0 1 1 -1 H8.500 L12.500 4.500 V13.500 a1 1 0 0 1 -1 1 H1.500 a1 1 0 0 1 -1 -1 Z" fill="#f0f0f0"/><path d="M4.800 4.500 L4 11.500 M8.300 4.500 L7.500 11.500 M2.800 6.500 H10 M2.500 9.500 H9.700" stroke="#2e8a3c" stroke-width="1.200"/></svg>
<div class="chk" style="left:1512px;top:718px"></div>
<svg style="left:1514px;top:721px" width="10" height="8" viewBox="0 0 10 8"><path d="M1 4 L3.800 6.800 L9 1" stroke="#e4e4e4" stroke-width="1.500" fill="none"/></svg>
<div class="t b" style="left:1532px;top:717px;">Player Movement (Script)</div>
<svg style="left:1861px;top:720px" width="11" height="11" viewBox="0 0 11 11"><circle cx="5.500" cy="5.500" r="5.300" fill="#c4c4c4"/><text x="5.500" y="8.800" text-anchor="middle" font-family="Liberation Sans,sans-serif" font-weight="bold" font-size="9" fill="#3e3e3e">?</text></svg>
<svg style="left:1881px;top:720px" width="11" height="10" viewBox="0 0 11 10"><path d="M0 2.500 H6 M8.500 2.500 H11 M0 7.500 H2.500 M5 7.500 H11" stroke="#c4c4c4" stroke-width="1.200"/><path d="M7 0 V5 M3.800 5 V10" stroke="#c4c4c4" stroke-width="1.300"/></svg>
<svg style="left:1906px;top:719px" width="3" height="12" viewBox="0 0 3 12"><rect x="0.500" y="0.500" width="2" height="2" fill="#c4c4c4"/><rect x="0.500" y="4.500" width="2" height="2" fill="#c4c4c4"/><rect x="0.500" y="8.500" width="2" height="2" fill="#c4c4c4"/></svg>
<div class="t " style="left:1491px;top:740px;color:#8a8a8a">Script</div>
<div class="inp" style="left:1654px;top:739px;width:262px;background:#313131;border-color:#2a2a2a"></div>
<div class="a" style="left:1896px;top:740px;width:19px;height:16px;background:#353535;border-radius:0 2px 2px 0"></div>
<svg style="left:1900px;top:742px" width="11" height="11" viewBox="0 0 11 11"><circle cx="5.500" cy="5.500" r="4.700" fill="none" stroke="#8a8a8a" stroke-width="1.100"/><circle cx="5.500" cy="5.500" r="1.900" fill="#8a8a8a"/></svg>
<svg style="left:1658px;top:742px" width="10" height="11" viewBox="0 0 10 11"><path d="M0.500 1 a0.800 0.800 0 0 1 0.800 -0.800 H6.500 L9.500 3.200 V10 a0.800 0.800 0 0 1 -0.800 0.800 H1.300 a0.800 0.800 0 0 1 -0.800 -0.800 Z" fill="#9a9f9a"/><path d="M3.800 3.500 L3.300 8.500 M6.300 3.500 L5.800 8.500 M2.300 4.800 H7.600 M2 7.200 H7.300" stroke="#3e6e46" stroke-width="0.900"/></svg>
<div class="t " style="left:1671px;top:740px;color:#8a8a8a">PlayerMovement</div>
<div class="t " style="left:1491px;top:760px;">Player Speed</div>
<div class="inp" style="left:1654px;top:759px;width:262px"></div>
<div class="t " style="left:1659px;top:760px;">2</div>
<div class="t " style="left:1491px;top:780px;">Jump Height</div>
<div class="inp" style="left:1654px;top:779px;width:262px"></div>
<div class="t " style="left:1659px;top:780px;">1</div>
<div class="t " style="left:1491px;top:800px;">Gravity Value</div>
<div class="inp" style="left:1654px;top:799px;width:262px"></div>
<div class="t " style="left:1659px;top:800px;">-9.81</div>
<div class="t " style="left:1491px;top:820px;">Camera Transform</div>
<div class="inp" style="left:1654px;top:819px;width:262px"></div>
<div class="a" style="left:1896px;top:820px;width:19px;height:16px;background:#383838;border-radius:0 2px 2px 0"></div>
<svg style="left:1900px;top:822px" width="11" height="11" viewBox="0 0 11 11"><circle cx="5.500" cy="5.500" r="4.700" fill="none" stroke="#c4c4c4" stroke-width="1.100"/><circle cx="5.500" cy="5.500" r="1.900" fill="#c4c4c4"/></svg>
<svg style="left:1658px;top:822px" width="11" height="11" viewBox="0 0 11 11"><path d="M5.500 6 V1" stroke="#9ae04a" stroke-width="1.500"/><path d="M5.500 6 L1 9.500" stroke="#4ab8f0" stroke-width="1.500"/><path d="M5.500 6 L10 9.500" stroke="#f0643c" stroke-width="1.500"/></svg>
<div class="t " style="left:1671px;top:820px;letter-spacing:0.03px">Camera Rig (Transform)</div>
<div class="a" style="left:1472px;top:844px;width:448px;height:1px;background:#2a2a2a"></div>
<div class="a" style="left:1472px;top:845px;width:448px;height:54px;background:#3b3b3b"></div>
<div class="a" style="left:1488px;top:851px;width:32px;height:32px;background:#515151"></div>
<svg style="left:1488px;top:851px" width="32" height="32" viewBox="0 0 32 32"><defs><radialGradient id="mball" cx="0.360" cy="0.300" r="0.750"><stop offset="0" stop-color="#6e7073"/><stop offset="0.450" stop-color="#45474a"/><stop offset="1" stop-color="#222325"/></radialGradient></defs><circle cx="16" cy="16" r="14.500" fill="url(#mball)"/></svg>
<div class="t " style="left:1528px;top:850px;color:#7e7e7e;font-size:13px;letter-spacing:0.33px">Lit (Material)</div>
<svg style="left:1873px;top:852px" width="11" height="11" viewBox="0 0 11 11"><circle cx="5.500" cy="5.500" r="5.300" fill="#c4c4c4"/><text x="5.500" y="8.800" text-anchor="middle" font-family="Liberation Sans,sans-serif" font-weight="bold" font-size="9" fill="#3e3e3e">?</text></svg>
<svg style="left:1890px;top:853px" width="11" height="10" viewBox="0 0 11 10"><path d="M0 2.500 H6 M8.500 2.500 H11 M0 7.500 H2.500 M5 7.500 H11" stroke="#7e7e7e" stroke-width="1.200"/><path d="M7 0 V5 M3.800 5 V10" stroke="#7e7e7e" stroke-width="1.300"/></svg>
<svg style="left:1911px;top:852px" width="3" height="12" viewBox="0 0 3 12"><rect x="0.500" y="0.500" width="2" height="2" fill="#c4c4c4"/><rect x="0.500" y="4.500" width="2" height="2" fill="#c4c4c4"/><rect x="0.500" y="8.500" width="2" height="2" fill="#c4c4c4"/></svg>
<svg style="left:1479px;top:883px" width="8" height="10" viewBox="0 0 8 10"><path d="M0.500 0.500 V9.500 L7.500 5 Z" fill="#6e6e6e"/></svg>
<div class="t " style="left:1525px;top:876px;color:#7e7e7e">Shader</div>
<div class="dd" style="left:1577px;top:876px;width:242px;height:16px;background:#474747;border-color:#3a3a3a"></div>
<div class="t " style="left:1581px;top:875px;color:#8a8a8a">Universal Render Pipeline/Lit</div>
<div class="arr" style="left:1805px;top:882px;border-left-width:4px;border-right-width:4px;border-top-color:#8a8a8a"></div>
<div class="a" style="left:1824px;top:874px;width:44px;height:16px;background:#474747;border-radius:2px"></div>
<div class="t " style="left:1830px;top:873px;color:#8a8a8a">Edit...</div>
<div class="a" style="left:1873px;top:876px;width:42px;height:16px;background:#474747;border-radius:2px"></div>
<svg style="left:1881px;top:879px" width="12" height="9" viewBox="0 0 12 9"><path d="M3 1 H12 M3 4.500 H12 M3 8 H12" stroke="#8a8a8a" stroke-width="1.100"/><path d="M0 1 H1.500 M0 4.500 H1.500 M0 8 H1.500" stroke="#8a8a8a" stroke-width="1.100"/></svg>
<div class="arr" style="left:1902px;top:882px;border-left-width:4px;border-right-width:4px;border-top-color:#8a8a8a"></div>
<div class="a" style="left:1472px;top:899px;width:448px;height:1px;background:#2a2a2a"></div>
<div class="a" style="left:1472px;top:910px;width:448px;height:1px;background:#1e1e1e"></div>
<div class="a" style="left:1582px;top:920px;width:228px;height:22px;background:#585858;border-radius:2px;border-bottom:1px solid #2a2a2a"></div>
<div class="t " style="left:1650px;top:922px;color:#e0e0e0">Add Component</div>
</body></html>
